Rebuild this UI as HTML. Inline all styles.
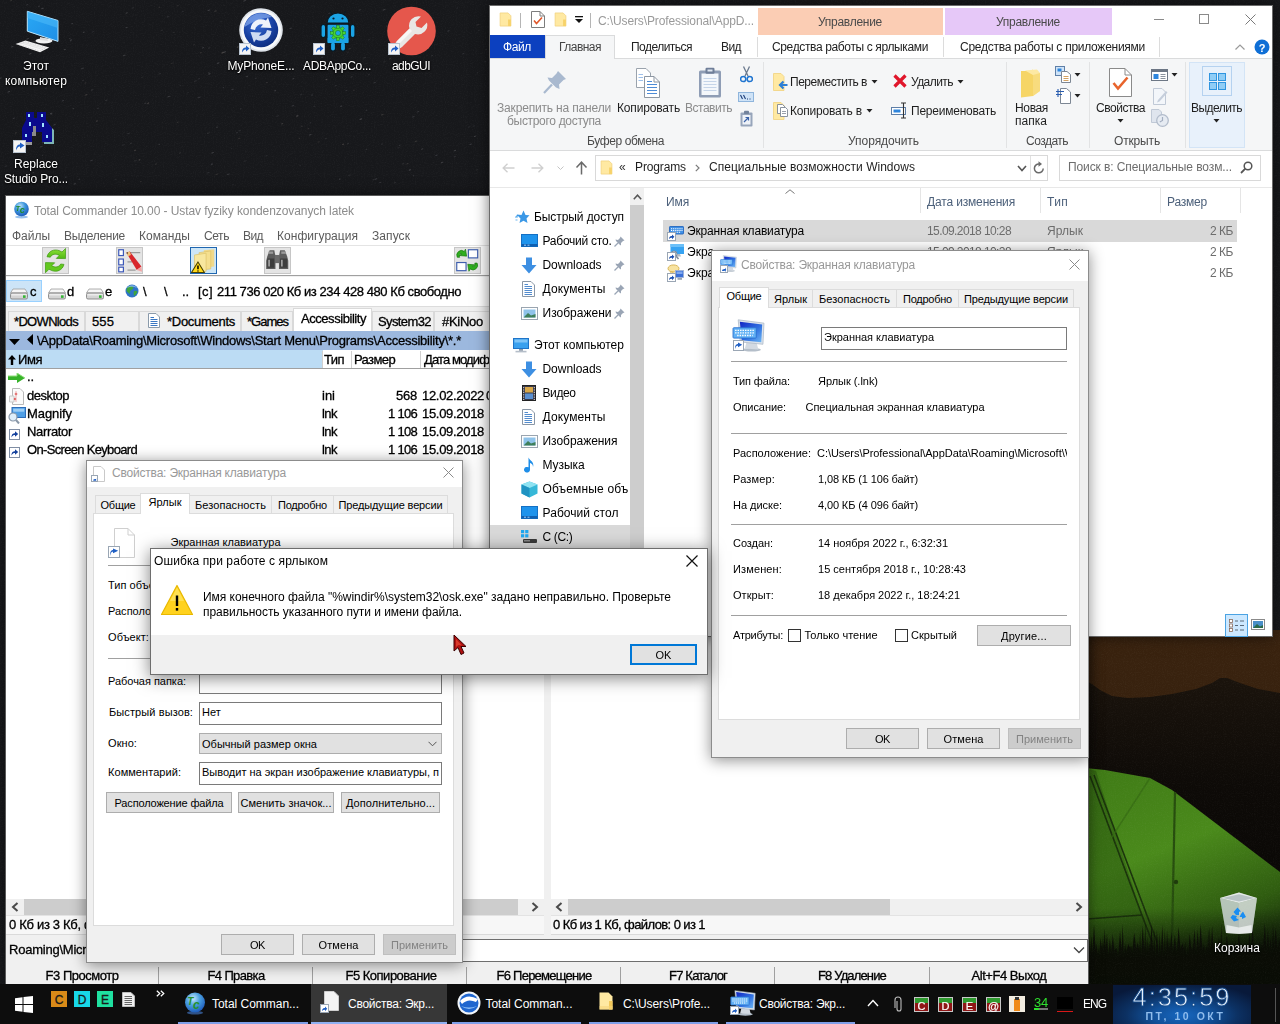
<!DOCTYPE html>
<html><head><meta charset="utf-8"><title>Desktop</title>
<style>
html,body{margin:0;padding:0;width:1280px;height:1024px;overflow:hidden;background:#17181b;font-family:"Liberation Sans", sans-serif;}
#d{position:relative;width:1280px;height:1024px;overflow:hidden;}
#d div,#d span,#d svg{position:absolute;box-sizing:border-box;}
#d span{white-space:pre;}
</style></head><body><div id="d">
<svg style="left:0;top:0" width="1280" height="1024" viewBox="0 0 1280 1024">
<defs>
<filter id="gr" x="0" y="0" width="100%" height="100%"><feTurbulence type="fractalNoise" baseFrequency="0.9" numOctaves="2" seed="3"/><feColorMatrix type="matrix" values="0 0 0 0 1  0 0 0 0 1  0 0 0 0 1  0.5 0.5 0 0 -0.42"/></filter>
<linearGradient id="sky" x1="0" y1="0" x2="0" y2="1"><stop offset="0" stop-color="#3a230f"/><stop offset="1" stop-color="#2b1a0b"/></linearGradient>
<linearGradient id="mt" x1="0" y1="0" x2="0" y2="1"><stop offset="0" stop-color="#1a130c"/><stop offset="0.35" stop-color="#0d0a07"/><stop offset="1" stop-color="#070605"/></linearGradient>
<linearGradient id="tent" x1="0" y1="0" x2="0.35" y2="1"><stop offset="0" stop-color="#3f7a16"/><stop offset="0.45" stop-color="#4a8a1b"/><stop offset="0.8" stop-color="#2f5c10"/><stop offset="1" stop-color="#16290a"/></linearGradient>
<linearGradient id="gnd" x1="0" y1="0" x2="0" y2="1"><stop offset="0" stop-color="#070905" stop-opacity="0"/><stop offset="0.35" stop-color="#070905" stop-opacity=".45"/><stop offset="0.6" stop-color="#070905" stop-opacity=".92"/><stop offset="1" stop-color="#060705"/></linearGradient>
</defs>
<rect width="1280" height="1024" fill="#17181b"/>
<g opacity=".7"><ellipse cx="161.9" cy="30.2" rx="1.4" ry="0.6" fill="#5a5a5e" opacity="0.39" transform="rotate(-18 161.9 30.2)"/><ellipse cx="182.8" cy="11.6" rx="1.3" ry="0.6" fill="#55555a" opacity="0.37" transform="rotate(-18 182.8 11.6)"/><ellipse cx="209.1" cy="48.1" rx="1.3" ry="0.6" fill="#5a5a5e" opacity="0.38" transform="rotate(-18 209.1 48.1)"/><ellipse cx="473.7" cy="126.1" rx="1.3" ry="0.6" fill="#55555a" opacity="0.38" transform="rotate(-18 473.7 126.1)"/><ellipse cx="24.8" cy="44.2" rx="1.3" ry="0.6" fill="#55555a" opacity="0.42" transform="rotate(-18 24.8 44.2)"/><ellipse cx="72.1" cy="23.6" rx="1.1" ry="0.6" fill="#4c4c52" opacity="0.80" transform="rotate(-18 72.1 23.6)"/><ellipse cx="51.5" cy="114.2" rx="1.0" ry="0.6" fill="#5a5a5e" opacity="0.40" transform="rotate(-18 51.5 114.2)"/><ellipse cx="282.2" cy="123.8" rx="1.2" ry="0.6" fill="#66605c" opacity="0.64" transform="rotate(-18 282.2 123.8)"/><ellipse cx="232.8" cy="184.7" rx="1.1" ry="0.6" fill="#4c4c52" opacity="0.49" transform="rotate(-18 232.8 184.7)"/><ellipse cx="349.5" cy="48.8" rx="1.3" ry="0.6" fill="#66605c" opacity="0.64" transform="rotate(-18 349.5 48.8)"/><ellipse cx="364.7" cy="57.6" rx="1.7" ry="0.6" fill="#55555a" opacity="0.41" transform="rotate(-18 364.7 57.6)"/><ellipse cx="82.5" cy="68.4" rx="1.6" ry="0.6" fill="#5a5a5e" opacity="0.58" transform="rotate(-18 82.5 68.4)"/><ellipse cx="382.3" cy="114.6" rx="1.6" ry="0.6" fill="#66605c" opacity="0.52" transform="rotate(-18 382.3 114.6)"/><ellipse cx="297.2" cy="116.0" rx="1.2" ry="0.6" fill="#66605c" opacity="0.81" transform="rotate(-18 297.2 116.0)"/><ellipse cx="237.0" cy="132.8" rx="0.9" ry="0.6" fill="#55555a" opacity="0.74" transform="rotate(-18 237.0 132.8)"/><ellipse cx="142.3" cy="77.2" rx="1.4" ry="0.6" fill="#55555a" opacity="0.36" transform="rotate(-18 142.3 77.2)"/><ellipse cx="177.7" cy="122.2" rx="1.2" ry="0.6" fill="#66605c" opacity="0.47" transform="rotate(-18 177.7 122.2)"/><ellipse cx="64.7" cy="49.5" rx="1.2" ry="0.6" fill="#5a5a5e" opacity="0.83" transform="rotate(-18 64.7 49.5)"/><ellipse cx="83.2" cy="80.3" rx="1.1" ry="0.6" fill="#55555a" opacity="0.43" transform="rotate(-18 83.2 80.3)"/><ellipse cx="432.0" cy="55.7" rx="1.2" ry="0.6" fill="#55555a" opacity="0.55" transform="rotate(-18 432.0 55.7)"/><ellipse cx="478.9" cy="30.2" rx="1.0" ry="0.6" fill="#4c4c52" opacity="0.48" transform="rotate(-18 478.9 30.2)"/><ellipse cx="6.0" cy="166.2" rx="1.0" ry="0.6" fill="#4c4c52" opacity="0.51" transform="rotate(-18 6.0 166.2)"/><ellipse cx="209.5" cy="73.9" rx="1.3" ry="0.6" fill="#5a5a5e" opacity="0.87" transform="rotate(-18 209.5 73.9)"/><ellipse cx="228.3" cy="174.2" rx="1.7" ry="0.6" fill="#55555a" opacity="0.72" transform="rotate(-18 228.3 174.2)"/><ellipse cx="199.0" cy="78.8" rx="1.2" ry="0.6" fill="#4c4c52" opacity="0.57" transform="rotate(-18 199.0 78.8)"/><ellipse cx="33.7" cy="41.8" rx="0.9" ry="0.6" fill="#5a5a5e" opacity="0.54" transform="rotate(-18 33.7 41.8)"/><ellipse cx="51.2" cy="113.4" rx="1.3" ry="0.6" fill="#5a5a5e" opacity="0.87" transform="rotate(-18 51.2 113.4)"/><ellipse cx="35.2" cy="41.6" rx="1.1" ry="0.6" fill="#66605c" opacity="0.70" transform="rotate(-18 35.2 41.6)"/><ellipse cx="301.1" cy="94.8" rx="0.9" ry="0.6" fill="#55555a" opacity="0.62" transform="rotate(-18 301.1 94.8)"/><ellipse cx="240.2" cy="62.4" rx="0.9" ry="0.6" fill="#66605c" opacity="0.76" transform="rotate(-18 240.2 62.4)"/><ellipse cx="239.3" cy="138.4" rx="1.3" ry="0.6" fill="#66605c" opacity="0.46" transform="rotate(-18 239.3 138.4)"/><ellipse cx="73.3" cy="108.6" rx="0.8" ry="0.6" fill="#5a5a5e" opacity="0.64" transform="rotate(-18 73.3 108.6)"/><ellipse cx="348.1" cy="52.2" rx="1.1" ry="0.6" fill="#4c4c52" opacity="0.44" transform="rotate(-18 348.1 52.2)"/><ellipse cx="266.3" cy="155.8" rx="1.1" ry="0.6" fill="#4c4c52" opacity="0.47" transform="rotate(-18 266.3 155.8)"/><ellipse cx="403.0" cy="163.7" rx="1.5" ry="0.6" fill="#55555a" opacity="0.47" transform="rotate(-18 403.0 163.7)"/><ellipse cx="177.8" cy="5.8" rx="0.8" ry="0.6" fill="#66605c" opacity="0.50" transform="rotate(-18 177.8 5.8)"/><ellipse cx="96.8" cy="121.0" rx="1.1" ry="0.6" fill="#66605c" opacity="0.79" transform="rotate(-18 96.8 121.0)"/><ellipse cx="477.5" cy="72.9" rx="1.0" ry="0.6" fill="#4c4c52" opacity="0.47" transform="rotate(-18 477.5 72.9)"/><ellipse cx="168.9" cy="96.5" rx="1.7" ry="0.6" fill="#5a5a5e" opacity="0.69" transform="rotate(-18 168.9 96.5)"/><ellipse cx="239.7" cy="130.6" rx="1.5" ry="0.6" fill="#5a5a5e" opacity="0.40" transform="rotate(-18 239.7 130.6)"/><ellipse cx="454.9" cy="156.5" rx="1.5" ry="0.6" fill="#4c4c52" opacity="0.61" transform="rotate(-18 454.9 156.5)"/><ellipse cx="217.0" cy="127.2" rx="0.9" ry="0.6" fill="#55555a" opacity="0.87" transform="rotate(-18 217.0 127.2)"/><ellipse cx="231.6" cy="148.7" rx="0.9" ry="0.6" fill="#4c4c52" opacity="0.44" transform="rotate(-18 231.6 148.7)"/><ellipse cx="13.8" cy="118.2" rx="1.2" ry="0.6" fill="#55555a" opacity="0.71" transform="rotate(-18 13.8 118.2)"/><ellipse cx="328.6" cy="70.1" rx="1.3" ry="0.6" fill="#5a5a5e" opacity="0.42" transform="rotate(-18 328.6 70.1)"/><ellipse cx="399.7" cy="145.3" rx="0.9" ry="0.6" fill="#4c4c52" opacity="0.76" transform="rotate(-18 399.7 145.3)"/><ellipse cx="216.9" cy="174.3" rx="1.5" ry="0.6" fill="#66605c" opacity="0.47" transform="rotate(-18 216.9 174.3)"/><ellipse cx="106.4" cy="100.2" rx="1.5" ry="0.6" fill="#55555a" opacity="0.53" transform="rotate(-18 106.4 100.2)"/><ellipse cx="417.1" cy="12.2" rx="1.5" ry="0.6" fill="#55555a" opacity="0.84" transform="rotate(-18 417.1 12.2)"/><ellipse cx="413.6" cy="175.6" rx="0.9" ry="0.6" fill="#5a5a5e" opacity="0.43" transform="rotate(-18 413.6 175.6)"/><ellipse cx="436.4" cy="155.3" rx="1.3" ry="0.6" fill="#4c4c52" opacity="0.78" transform="rotate(-18 436.4 155.3)"/><ellipse cx="86.2" cy="94.7" rx="1.5" ry="0.6" fill="#66605c" opacity="0.66" transform="rotate(-18 86.2 94.7)"/><ellipse cx="341.2" cy="106.1" rx="1.2" ry="0.6" fill="#5a5a5e" opacity="0.78" transform="rotate(-18 341.2 106.1)"/><ellipse cx="124.2" cy="55.4" rx="1.5" ry="0.6" fill="#5a5a5e" opacity="0.63" transform="rotate(-18 124.2 55.4)"/><ellipse cx="380.0" cy="182.5" rx="1.2" ry="0.6" fill="#4c4c52" opacity="0.69" transform="rotate(-18 380.0 182.5)"/><ellipse cx="346.4" cy="90.5" rx="1.3" ry="0.6" fill="#4c4c52" opacity="0.61" transform="rotate(-18 346.4 90.5)"/><ellipse cx="349.6" cy="175.3" rx="1.6" ry="0.6" fill="#4c4c52" opacity="0.49" transform="rotate(-18 349.6 175.3)"/><ellipse cx="420.0" cy="27.4" rx="0.9" ry="0.6" fill="#5a5a5e" opacity="0.59" transform="rotate(-18 420.0 27.4)"/><ellipse cx="335.6" cy="85.7" rx="1.0" ry="0.6" fill="#5a5a5e" opacity="0.52" transform="rotate(-18 335.6 85.7)"/><ellipse cx="448.5" cy="30.9" rx="1.4" ry="0.6" fill="#4c4c52" opacity="0.71" transform="rotate(-18 448.5 30.9)"/><ellipse cx="126.6" cy="27.5" rx="1.2" ry="0.6" fill="#5a5a5e" opacity="0.76" transform="rotate(-18 126.6 27.5)"/><ellipse cx="199.1" cy="97.5" rx="1.7" ry="0.6" fill="#4c4c52" opacity="0.81" transform="rotate(-18 199.1 97.5)"/><ellipse cx="353.2" cy="198.8" rx="1.2" ry="0.6" fill="#66605c" opacity="0.58" transform="rotate(-18 353.2 198.8)"/><ellipse cx="159.3" cy="144.4" rx="0.8" ry="0.6" fill="#55555a" opacity="0.65" transform="rotate(-18 159.3 144.4)"/><ellipse cx="351.6" cy="76.9" rx="1.3" ry="0.6" fill="#5a5a5e" opacity="0.51" transform="rotate(-18 351.6 76.9)"/><ellipse cx="56.4" cy="183.7" rx="1.0" ry="0.6" fill="#5a5a5e" opacity="0.83" transform="rotate(-18 56.4 183.7)"/><ellipse cx="132.8" cy="7.9" rx="1.5" ry="0.6" fill="#4c4c52" opacity="0.50" transform="rotate(-18 132.8 7.9)"/><ellipse cx="409.9" cy="169.9" rx="1.4" ry="0.6" fill="#55555a" opacity="0.87" transform="rotate(-18 409.9 169.9)"/><ellipse cx="74.7" cy="183.8" rx="1.3" ry="0.6" fill="#5a5a5e" opacity="0.74" transform="rotate(-18 74.7 183.8)"/><ellipse cx="139.5" cy="159.9" rx="1.0" ry="0.6" fill="#66605c" opacity="0.84" transform="rotate(-18 139.5 159.9)"/><ellipse cx="469.2" cy="126.9" rx="1.5" ry="0.6" fill="#4c4c52" opacity="0.40" transform="rotate(-18 469.2 126.9)"/><ellipse cx="33.3" cy="172.6" rx="1.2" ry="0.6" fill="#55555a" opacity="0.54" transform="rotate(-18 33.3 172.6)"/><ellipse cx="463.3" cy="53.6" rx="0.9" ry="0.6" fill="#4c4c52" opacity="0.64" transform="rotate(-18 463.3 53.6)"/><ellipse cx="469.1" cy="193.8" rx="1.0" ry="0.6" fill="#66605c" opacity="0.45" transform="rotate(-18 469.1 193.8)"/><ellipse cx="314.3" cy="106.2" rx="1.0" ry="0.6" fill="#4c4c52" opacity="0.60" transform="rotate(-18 314.3 106.2)"/><ellipse cx="135.3" cy="160.7" rx="1.7" ry="0.6" fill="#5a5a5e" opacity="0.37" transform="rotate(-18 135.3 160.7)"/><ellipse cx="366.5" cy="110.2" rx="1.0" ry="0.6" fill="#55555a" opacity="0.61" transform="rotate(-18 366.5 110.2)"/><ellipse cx="53.1" cy="163.8" rx="1.2" ry="0.6" fill="#55555a" opacity="0.62" transform="rotate(-18 53.1 163.8)"/><ellipse cx="485.2" cy="61.6" rx="1.0" ry="0.6" fill="#4c4c52" opacity="0.48" transform="rotate(-18 485.2 61.6)"/><ellipse cx="416.1" cy="141.3" rx="1.4" ry="0.6" fill="#66605c" opacity="0.57" transform="rotate(-18 416.1 141.3)"/><ellipse cx="490.9" cy="167.4" rx="0.8" ry="0.6" fill="#66605c" opacity="0.69" transform="rotate(-18 490.9 167.4)"/><ellipse cx="215.4" cy="11.1" rx="1.4" ry="0.6" fill="#66605c" opacity="0.56" transform="rotate(-18 215.4 11.1)"/><ellipse cx="299.4" cy="138.5" rx="0.8" ry="0.6" fill="#66605c" opacity="0.45" transform="rotate(-18 299.4 138.5)"/><ellipse cx="222.9" cy="52.6" rx="1.7" ry="0.6" fill="#66605c" opacity="0.88" transform="rotate(-18 222.9 52.6)"/><ellipse cx="122.2" cy="193.1" rx="1.1" ry="0.6" fill="#5a5a5e" opacity="0.55" transform="rotate(-18 122.2 193.1)"/><ellipse cx="167.7" cy="16.8" rx="1.1" ry="0.6" fill="#4c4c52" opacity="0.71" transform="rotate(-18 167.7 16.8)"/><ellipse cx="252.4" cy="1.0" rx="1.0" ry="0.6" fill="#55555a" opacity="0.40" transform="rotate(-18 252.4 1.0)"/><ellipse cx="293.4" cy="78.8" rx="1.1" ry="0.6" fill="#5a5a5e" opacity="0.70" transform="rotate(-18 293.4 78.8)"/><ellipse cx="292.8" cy="105.8" rx="1.5" ry="0.6" fill="#55555a" opacity="0.71" transform="rotate(-18 292.8 105.8)"/><ellipse cx="382.2" cy="144.1" rx="1.2" ry="0.6" fill="#4c4c52" opacity="0.51" transform="rotate(-18 382.2 144.1)"/><ellipse cx="21.9" cy="167.1" rx="1.6" ry="0.6" fill="#4c4c52" opacity="0.70" transform="rotate(-18 21.9 167.1)"/><ellipse cx="454.9" cy="150.6" rx="1.3" ry="0.6" fill="#5a5a5e" opacity="0.80" transform="rotate(-18 454.9 150.6)"/><ellipse cx="413.2" cy="116.8" rx="1.6" ry="0.6" fill="#4c4c52" opacity="0.73" transform="rotate(-18 413.2 116.8)"/><ellipse cx="42.5" cy="8.4" rx="1.4" ry="0.6" fill="#55555a" opacity="0.88" transform="rotate(-18 42.5 8.4)"/><ellipse cx="417.9" cy="111.7" rx="1.4" ry="0.6" fill="#4c4c52" opacity="0.69" transform="rotate(-18 417.9 111.7)"/><ellipse cx="244.6" cy="0.7" rx="1.5" ry="0.6" fill="#5a5a5e" opacity="0.76" transform="rotate(-18 244.6 0.7)"/><ellipse cx="329.6" cy="13.2" rx="1.5" ry="0.6" fill="#5a5a5e" opacity="0.49" transform="rotate(-18 329.6 13.2)"/><ellipse cx="423.1" cy="47.0" rx="1.5" ry="0.6" fill="#55555a" opacity="0.48" transform="rotate(-18 423.1 47.0)"/><ellipse cx="247.0" cy="76.5" rx="1.2" ry="0.6" fill="#5a5a5e" opacity="0.73" transform="rotate(-18 247.0 76.5)"/><ellipse cx="308.5" cy="128.6" rx="0.9" ry="0.6" fill="#66605c" opacity="0.43" transform="rotate(-18 308.5 128.6)"/><ellipse cx="325.8" cy="138.6" rx="1.4" ry="0.6" fill="#55555a" opacity="0.42" transform="rotate(-18 325.8 138.6)"/><ellipse cx="30.3" cy="53.8" rx="1.4" ry="0.6" fill="#55555a" opacity="0.73" transform="rotate(-18 30.3 53.8)"/><ellipse cx="145.4" cy="103.3" rx="1.2" ry="0.6" fill="#5a5a5e" opacity="0.61" transform="rotate(-18 145.4 103.3)"/><ellipse cx="496.7" cy="109.8" rx="1.1" ry="0.6" fill="#55555a" opacity="0.40" transform="rotate(-18 496.7 109.8)"/><ellipse cx="8.8" cy="91.8" rx="1.5" ry="0.6" fill="#55555a" opacity="0.88" transform="rotate(-18 8.8 91.8)"/><ellipse cx="497.0" cy="77.4" rx="1.6" ry="0.6" fill="#5a5a5e" opacity="0.86" transform="rotate(-18 497.0 77.4)"/><ellipse cx="290.7" cy="28.3" rx="1.3" ry="0.6" fill="#4c4c52" opacity="0.87" transform="rotate(-18 290.7 28.3)"/><ellipse cx="301.7" cy="126.3" rx="1.1" ry="0.6" fill="#66605c" opacity="0.41" transform="rotate(-18 301.7 126.3)"/><ellipse cx="115.7" cy="179.5" rx="1.2" ry="0.6" fill="#5a5a5e" opacity="0.36" transform="rotate(-18 115.7 179.5)"/><ellipse cx="475.0" cy="136.3" rx="1.2" ry="0.6" fill="#55555a" opacity="0.75" transform="rotate(-18 475.0 136.3)"/><ellipse cx="172.0" cy="63.2" rx="1.6" ry="0.6" fill="#66605c" opacity="0.35" transform="rotate(-18 172.0 63.2)"/><ellipse cx="419.6" cy="24.0" rx="1.6" ry="0.6" fill="#66605c" opacity="0.74" transform="rotate(-18 419.6 24.0)"/><ellipse cx="126.6" cy="13.0" rx="1.2" ry="0.6" fill="#5a5a5e" opacity="0.83" transform="rotate(-18 126.6 13.0)"/><ellipse cx="180.4" cy="85.6" rx="1.0" ry="0.6" fill="#5a5a5e" opacity="0.38" transform="rotate(-18 180.4 85.6)"/><ellipse cx="25.8" cy="132.4" rx="1.4" ry="0.6" fill="#66605c" opacity="0.43" transform="rotate(-18 25.8 132.4)"/><ellipse cx="218.1" cy="63.1" rx="1.5" ry="0.6" fill="#55555a" opacity="0.78" transform="rotate(-18 218.1 63.1)"/><ellipse cx="442.1" cy="162.4" rx="1.4" ry="0.6" fill="#4c4c52" opacity="0.85" transform="rotate(-18 442.1 162.4)"/><ellipse cx="359.8" cy="9.9" rx="1.5" ry="0.6" fill="#4c4c52" opacity="0.60" transform="rotate(-18 359.8 9.9)"/><ellipse cx="322.2" cy="57.2" rx="0.8" ry="0.6" fill="#4c4c52" opacity="0.86" transform="rotate(-18 322.2 57.2)"/><ellipse cx="85.4" cy="83.0" rx="1.1" ry="0.6" fill="#66605c" opacity="0.49" transform="rotate(-18 85.4 83.0)"/><ellipse cx="203.1" cy="47.7" rx="1.2" ry="0.6" fill="#5a5a5e" opacity="0.72" transform="rotate(-18 203.1 47.7)"/><ellipse cx="83.7" cy="32.3" rx="1.0" ry="0.6" fill="#55555a" opacity="0.85" transform="rotate(-18 83.7 32.3)"/><ellipse cx="275.2" cy="90.6" rx="1.1" ry="0.6" fill="#55555a" opacity="0.77" transform="rotate(-18 275.2 90.6)"/><ellipse cx="69.8" cy="38.5" rx="0.9" ry="0.6" fill="#5a5a5e" opacity="0.54" transform="rotate(-18 69.8 38.5)"/><ellipse cx="159.6" cy="73.7" rx="1.5" ry="0.6" fill="#5a5a5e" opacity="0.46" transform="rotate(-18 159.6 73.7)"/><ellipse cx="374.8" cy="82.6" rx="1.2" ry="0.6" fill="#55555a" opacity="0.64" transform="rotate(-18 374.8 82.6)"/><ellipse cx="135.1" cy="150.4" rx="1.2" ry="0.6" fill="#66605c" opacity="0.67" transform="rotate(-18 135.1 150.4)"/><ellipse cx="62.9" cy="100.7" rx="1.4" ry="0.6" fill="#4c4c52" opacity="0.82" transform="rotate(-18 62.9 100.7)"/><ellipse cx="46.3" cy="179.4" rx="1.1" ry="0.6" fill="#55555a" opacity="0.71" transform="rotate(-18 46.3 179.4)"/><ellipse cx="477.0" cy="169.7" rx="1.6" ry="0.6" fill="#5a5a5e" opacity="0.36" transform="rotate(-18 477.0 169.7)"/><ellipse cx="212.6" cy="152.7" rx="1.5" ry="0.6" fill="#55555a" opacity="0.88" transform="rotate(-18 212.6 152.7)"/><ellipse cx="0.1" cy="78.3" rx="1.6" ry="0.6" fill="#55555a" opacity="0.80" transform="rotate(-18 0.1 78.3)"/><ellipse cx="486.1" cy="49.7" rx="0.9" ry="0.6" fill="#5a5a5e" opacity="0.43" transform="rotate(-18 486.1 49.7)"/><ellipse cx="470.7" cy="144.3" rx="1.4" ry="0.6" fill="#55555a" opacity="0.77" transform="rotate(-18 470.7 144.3)"/><ellipse cx="42.5" cy="155.4" rx="0.8" ry="0.6" fill="#5a5a5e" opacity="0.42" transform="rotate(-18 42.5 155.4)"/><ellipse cx="322.8" cy="60.8" rx="0.9" ry="0.6" fill="#55555a" opacity="0.49" transform="rotate(-18 322.8 60.8)"/><ellipse cx="349.3" cy="22.4" rx="0.9" ry="0.6" fill="#4c4c52" opacity="0.64" transform="rotate(-18 349.3 22.4)"/><ellipse cx="194.0" cy="44.7" rx="1.3" ry="0.6" fill="#66605c" opacity="0.36" transform="rotate(-18 194.0 44.7)"/><ellipse cx="498.2" cy="55.7" rx="1.1" ry="0.6" fill="#4c4c52" opacity="0.81" transform="rotate(-18 498.2 55.7)"/><ellipse cx="237.7" cy="47.0" rx="1.0" ry="0.6" fill="#66605c" opacity="0.88" transform="rotate(-18 237.7 47.0)"/><ellipse cx="27.7" cy="38.8" rx="1.6" ry="0.6" fill="#5a5a5e" opacity="0.71" transform="rotate(-18 27.7 38.8)"/><ellipse cx="128.6" cy="133.5" rx="1.6" ry="0.6" fill="#5a5a5e" opacity="0.47" transform="rotate(-18 128.6 133.5)"/><ellipse cx="347.9" cy="143.7" rx="1.1" ry="0.6" fill="#5a5a5e" opacity="0.57" transform="rotate(-18 347.9 143.7)"/><ellipse cx="398.5" cy="147.8" rx="1.3" ry="0.6" fill="#4c4c52" opacity="0.46" transform="rotate(-18 398.5 147.8)"/><ellipse cx="155.9" cy="164.0" rx="1.0" ry="0.6" fill="#66605c" opacity="0.47" transform="rotate(-18 155.9 164.0)"/><ellipse cx="54.5" cy="124.7" rx="1.3" ry="0.6" fill="#55555a" opacity="0.84" transform="rotate(-18 54.5 124.7)"/><ellipse cx="208.5" cy="133.1" rx="1.7" ry="0.6" fill="#55555a" opacity="0.43" transform="rotate(-18 208.5 133.1)"/><ellipse cx="27.2" cy="4.7" rx="1.3" ry="0.6" fill="#5a5a5e" opacity="0.58" transform="rotate(-18 27.2 4.7)"/><ellipse cx="92.1" cy="89.9" rx="1.4" ry="0.6" fill="#5a5a5e" opacity="0.52" transform="rotate(-18 92.1 89.9)"/><ellipse cx="498.8" cy="186.3" rx="1.1" ry="0.6" fill="#55555a" opacity="0.45" transform="rotate(-18 498.8 186.3)"/><ellipse cx="15.9" cy="132.9" rx="1.1" ry="0.6" fill="#66605c" opacity="0.56" transform="rotate(-18 15.9 132.9)"/><ellipse cx="221.2" cy="21.8" rx="0.9" ry="0.6" fill="#55555a" opacity="0.39" transform="rotate(-18 221.2 21.8)"/><ellipse cx="477.8" cy="24.7" rx="1.7" ry="0.6" fill="#66605c" opacity="0.46" transform="rotate(-18 477.8 24.7)"/><ellipse cx="384.4" cy="61.7" rx="1.5" ry="0.6" fill="#55555a" opacity="0.40" transform="rotate(-18 384.4 61.7)"/><ellipse cx="97.9" cy="108.3" rx="1.2" ry="0.6" fill="#55555a" opacity="0.53" transform="rotate(-18 97.9 108.3)"/><ellipse cx="15.1" cy="82.2" rx="1.5" ry="0.6" fill="#5a5a5e" opacity="0.77" transform="rotate(-18 15.1 82.2)"/><ellipse cx="187.8" cy="92.8" rx="1.5" ry="0.6" fill="#4c4c52" opacity="0.38" transform="rotate(-18 187.8 92.8)"/><ellipse cx="373.6" cy="179.7" rx="1.1" ry="0.6" fill="#5a5a5e" opacity="0.50" transform="rotate(-18 373.6 179.7)"/><ellipse cx="131.1" cy="143.3" rx="1.1" ry="0.6" fill="#5a5a5e" opacity="0.50" transform="rotate(-18 131.1 143.3)"/><ellipse cx="360.8" cy="119.1" rx="1.5" ry="0.6" fill="#5a5a5e" opacity="0.87" transform="rotate(-18 360.8 119.1)"/><ellipse cx="12.1" cy="46.8" rx="1.2" ry="0.6" fill="#55555a" opacity="0.88" transform="rotate(-18 12.1 46.8)"/><ellipse cx="394.9" cy="182.7" rx="1.5" ry="0.6" fill="#55555a" opacity="0.42" transform="rotate(-18 394.9 182.7)"/><ellipse cx="91.5" cy="160.5" rx="1.5" ry="0.6" fill="#4c4c52" opacity="0.80" transform="rotate(-18 91.5 160.5)"/><ellipse cx="303.6" cy="65.6" rx="1.1" ry="0.6" fill="#5a5a5e" opacity="0.55" transform="rotate(-18 303.6 65.6)"/><ellipse cx="255.9" cy="78.3" rx="0.9" ry="0.6" fill="#5a5a5e" opacity="0.57" transform="rotate(-18 255.9 78.3)"/><ellipse cx="240.8" cy="108.9" rx="0.9" ry="0.6" fill="#5a5a5e" opacity="0.58" transform="rotate(-18 240.8 108.9)"/><ellipse cx="493.9" cy="53.0" rx="0.9" ry="0.6" fill="#55555a" opacity="0.40" transform="rotate(-18 493.9 53.0)"/><ellipse cx="494.2" cy="194.4" rx="1.0" ry="0.6" fill="#55555a" opacity="0.42" transform="rotate(-18 494.2 194.4)"/><ellipse cx="310.2" cy="134.8" rx="1.5" ry="0.6" fill="#5a5a5e" opacity="0.82" transform="rotate(-18 310.2 134.8)"/><ellipse cx="389.9" cy="58.8" rx="1.1" ry="0.6" fill="#66605c" opacity="0.50" transform="rotate(-18 389.9 58.8)"/><ellipse cx="369.0" cy="39.8" rx="1.0" ry="0.6" fill="#4c4c52" opacity="0.48" transform="rotate(-18 369.0 39.8)"/><ellipse cx="140.7" cy="181.5" rx="1.0" ry="0.6" fill="#66605c" opacity="0.39" transform="rotate(-18 140.7 181.5)"/><ellipse cx="496.2" cy="101.5" rx="1.0" ry="0.6" fill="#55555a" opacity="0.79" transform="rotate(-18 496.2 101.5)"/><ellipse cx="495.5" cy="20.5" rx="1.2" ry="0.6" fill="#55555a" opacity="0.80" transform="rotate(-18 495.5 20.5)"/><ellipse cx="457.2" cy="8.1" rx="1.1" ry="0.6" fill="#4c4c52" opacity="0.42" transform="rotate(-18 457.2 8.1)"/><ellipse cx="300.2" cy="165.6" rx="1.0" ry="0.6" fill="#4c4c52" opacity="0.39" transform="rotate(-18 300.2 165.6)"/><ellipse cx="224.6" cy="52.0" rx="1.5" ry="0.6" fill="#5a5a5e" opacity="0.87" transform="rotate(-18 224.6 52.0)"/><ellipse cx="318.7" cy="141.9" rx="1.1" ry="0.6" fill="#66605c" opacity="0.37" transform="rotate(-18 318.7 141.9)"/><ellipse cx="70.7" cy="40.8" rx="1.0" ry="0.6" fill="#4c4c52" opacity="0.68" transform="rotate(-18 70.7 40.8)"/><ellipse cx="407.4" cy="163.8" rx="1.2" ry="0.6" fill="#66605c" opacity="0.55" transform="rotate(-18 407.4 163.8)"/><ellipse cx="39.0" cy="6.3" rx="1.2" ry="0.6" fill="#55555a" opacity="0.62" transform="rotate(-18 39.0 6.3)"/><ellipse cx="50.7" cy="79.1" rx="1.3" ry="0.6" fill="#5a5a5e" opacity="0.70" transform="rotate(-18 50.7 79.1)"/><ellipse cx="326.5" cy="79.6" rx="1.0" ry="0.6" fill="#66605c" opacity="0.89" transform="rotate(-18 326.5 79.6)"/><ellipse cx="208.9" cy="10.3" rx="1.5" ry="0.6" fill="#55555a" opacity="0.84" transform="rotate(-18 208.9 10.3)"/><ellipse cx="208.2" cy="172.8" rx="1.7" ry="0.6" fill="#4c4c52" opacity="0.55" transform="rotate(-18 208.2 172.8)"/><ellipse cx="195.4" cy="81.0" rx="1.6" ry="0.6" fill="#4c4c52" opacity="0.59" transform="rotate(-18 195.4 81.0)"/><ellipse cx="211.9" cy="164.1" rx="1.2" ry="0.6" fill="#55555a" opacity="0.84" transform="rotate(-18 211.9 164.1)"/><ellipse cx="386.5" cy="26.0" rx="0.8" ry="0.6" fill="#55555a" opacity="0.43" transform="rotate(-18 386.5 26.0)"/><ellipse cx="44.5" cy="124.4" rx="1.1" ry="0.6" fill="#4c4c52" opacity="0.63" transform="rotate(-18 44.5 124.4)"/><ellipse cx="174.0" cy="32.4" rx="1.0" ry="0.6" fill="#55555a" opacity="0.39" transform="rotate(-18 174.0 32.4)"/><ellipse cx="245.3" cy="161.0" rx="1.7" ry="0.6" fill="#4c4c52" opacity="0.46" transform="rotate(-18 245.3 161.0)"/><ellipse cx="418.6" cy="8.7" rx="1.6" ry="0.6" fill="#55555a" opacity="0.52" transform="rotate(-18 418.6 8.7)"/><ellipse cx="43.1" cy="142.5" rx="1.4" ry="0.6" fill="#4c4c52" opacity="0.84" transform="rotate(-18 43.1 142.5)"/><ellipse cx="310.5" cy="122.9" rx="1.0" ry="0.6" fill="#4c4c52" opacity="0.61" transform="rotate(-18 310.5 122.9)"/><ellipse cx="20.9" cy="187.7" rx="0.9" ry="0.6" fill="#4c4c52" opacity="0.55" transform="rotate(-18 20.9 187.7)"/><ellipse cx="123.5" cy="145.0" rx="1.6" ry="0.6" fill="#5a5a5e" opacity="0.37" transform="rotate(-18 123.5 145.0)"/><ellipse cx="333.9" cy="64.8" rx="1.2" ry="0.6" fill="#66605c" opacity="0.60" transform="rotate(-18 333.9 64.8)"/><ellipse cx="324.5" cy="61.6" rx="1.0" ry="0.6" fill="#66605c" opacity="0.56" transform="rotate(-18 324.5 61.6)"/><ellipse cx="223.4" cy="87.7" rx="0.8" ry="0.6" fill="#55555a" opacity="0.69" transform="rotate(-18 223.4 87.7)"/><ellipse cx="232.6" cy="89.4" rx="1.4" ry="0.6" fill="#4c4c52" opacity="0.80" transform="rotate(-18 232.6 89.4)"/><ellipse cx="405.3" cy="80.1" rx="0.9" ry="0.6" fill="#66605c" opacity="0.55" transform="rotate(-18 405.3 80.1)"/><ellipse cx="45.9" cy="88.4" rx="1.3" ry="0.6" fill="#4c4c52" opacity="0.37" transform="rotate(-18 45.9 88.4)"/><ellipse cx="41.1" cy="146.7" rx="1.5" ry="0.6" fill="#5a5a5e" opacity="0.63" transform="rotate(-18 41.1 146.7)"/><ellipse cx="376.0" cy="179.0" rx="1.4" ry="0.6" fill="#5a5a5e" opacity="0.78" transform="rotate(-18 376.0 179.0)"/><ellipse cx="428.5" cy="199.2" rx="1.5" ry="0.6" fill="#4c4c52" opacity="0.80" transform="rotate(-18 428.5 199.2)"/><ellipse cx="65.8" cy="177.1" rx="1.1" ry="0.6" fill="#4c4c52" opacity="0.80" transform="rotate(-18 65.8 177.1)"/><ellipse cx="343.1" cy="144.2" rx="1.0" ry="0.6" fill="#66605c" opacity="0.81" transform="rotate(-18 343.1 144.2)"/><ellipse cx="79.4" cy="179.3" rx="1.0" ry="0.6" fill="#4c4c52" opacity="0.80" transform="rotate(-18 79.4 179.3)"/><ellipse cx="127.1" cy="192.9" rx="1.2" ry="0.6" fill="#4c4c52" opacity="0.68" transform="rotate(-18 127.1 192.9)"/><ellipse cx="159.5" cy="7.4" rx="1.0" ry="0.6" fill="#66605c" opacity="0.44" transform="rotate(-18 159.5 7.4)"/><ellipse cx="339.8" cy="179.1" rx="1.0" ry="0.6" fill="#5a5a5e" opacity="0.78" transform="rotate(-18 339.8 179.1)"/><ellipse cx="384.1" cy="9.7" rx="1.6" ry="0.6" fill="#55555a" opacity="0.88" transform="rotate(-18 384.1 9.7)"/><ellipse cx="277.6" cy="116.0" rx="1.6" ry="0.6" fill="#55555a" opacity="0.41" transform="rotate(-18 277.6 116.0)"/><ellipse cx="369.0" cy="74.3" rx="1.1" ry="0.6" fill="#4c4c52" opacity="0.55" transform="rotate(-18 369.0 74.3)"/><ellipse cx="180.1" cy="152.9" rx="1.2" ry="0.6" fill="#5a5a5e" opacity="0.45" transform="rotate(-18 180.1 152.9)"/><ellipse cx="148.2" cy="103.2" rx="1.1" ry="0.6" fill="#66605c" opacity="0.88" transform="rotate(-18 148.2 103.2)"/><ellipse cx="366.5" cy="149.4" rx="1.0" ry="0.6" fill="#55555a" opacity="0.51" transform="rotate(-18 366.5 149.4)"/><ellipse cx="208.8" cy="72.8" rx="0.8" ry="0.6" fill="#5a5a5e" opacity="0.62" transform="rotate(-18 208.8 72.8)"/><ellipse cx="11.1" cy="0.5" rx="1.1" ry="0.6" fill="#66605c" opacity="0.41" transform="rotate(-18 11.1 0.5)"/><ellipse cx="267.1" cy="82.6" rx="1.1" ry="0.6" fill="#66605c" opacity="0.42" transform="rotate(-18 267.1 82.6)"/><ellipse cx="312.0" cy="95.0" rx="0.9" ry="0.6" fill="#4c4c52" opacity="0.87" transform="rotate(-18 312.0 95.0)"/><ellipse cx="353.7" cy="90.2" rx="0.9" ry="0.6" fill="#66605c" opacity="0.43" transform="rotate(-18 353.7 90.2)"/><ellipse cx="201.0" cy="52.8" rx="0.8" ry="0.6" fill="#66605c" opacity="0.70" transform="rotate(-18 201.0 52.8)"/><ellipse cx="297.4" cy="115.7" rx="1.3" ry="0.6" fill="#55555a" opacity="0.63" transform="rotate(-18 297.4 115.7)"/><ellipse cx="124.2" cy="180.7" rx="0.8" ry="0.6" fill="#55555a" opacity="0.64" transform="rotate(-18 124.2 180.7)"/><ellipse cx="92.8" cy="31.8" rx="1.6" ry="0.6" fill="#4c4c52" opacity="0.41" transform="rotate(-18 92.8 31.8)"/><ellipse cx="71.1" cy="39.9" rx="1.3" ry="0.6" fill="#55555a" opacity="0.63" transform="rotate(-18 71.1 39.9)"/><ellipse cx="406.7" cy="34.9" rx="1.1" ry="0.6" fill="#5a5a5e" opacity="0.52" transform="rotate(-18 406.7 34.9)"/><ellipse cx="497.0" cy="144.9" rx="1.2" ry="0.6" fill="#55555a" opacity="0.65" transform="rotate(-18 497.0 144.9)"/><ellipse cx="422.2" cy="149.0" rx="1.2" ry="0.6" fill="#55555a" opacity="0.76" transform="rotate(-18 422.2 149.0)"/></g>
<rect x="1085" y="630" width="195" height="360" fill="url(#sky)"/>
<path d="M1085 681 L1092 684 L1100 690 L1112 696 L1128 698 L1150 697 L1172 694 L1196 689 L1212 683 L1220 678 L1227 678 L1240 683 L1258 689 L1280 693 L1280 990 L1085 990Z" fill="url(#mt)"/>
<path d="M1085 768 L1105 770 L1150 778 L1172 790 L1280 872 L1280 990 L1085 990Z" fill="url(#tent)"/>
<path d="M1085 768 L1096 771 L1150 940 L1085 940Z" fill="#2c5a10" opacity=".55"/>
<path d="M1090 776 L1152 942 M1094 775 L1157 942" stroke="#1a330b" stroke-width="1.6" fill="none"/>
<path d="M1150 778 L1110 840" stroke="#356a13" stroke-width="1.5" fill="none" opacity=".7"/>
<path d="M1175 792 L1172 940" stroke="#274e0e" stroke-width="2.2" fill="none"/>
<circle cx="1176" cy="882" r="2.2" fill="#1e3b0b"/>
<path d="M1087 919 L1142 915" stroke="#1a330b" stroke-width="1.6" fill="none"/>
<rect x="1085" y="908" width="195" height="82" fill="url(#gnd)"/>
<path d="M1085 990 L1085 945 L1086.3 936.6 L1087.6 957.2 L1089.0 935.2 L1090.3 953.9 L1091.3 935.3 L1092.3 954.3 L1094.0 924.4 L1095.7 951.0 L1096.6 943.1 L1097.5 954.9 L1098.3 947.5 L1099.1 957.6 L1100.6 938.0 L1102.2 949.6 L1103.0 935.7 L1103.7 948.6 L1104.7 928.3 L1105.7 948.3 L1107.0 933.5 L1108.4 956.4 L1109.8 938.6 L1111.2 953.0 L1112.8 933.9 L1114.3 950.8 L1116.3 947.9 L1118.3 956.4 L1120.0 930.2 L1121.6 950.3 L1122.7 923.8 L1123.8 955.7 L1125.1 944.0 L1126.3 951.9 L1128.3 944.0 L1130.2 948.0 L1131.2 945.7 L1132.2 952.7 L1134.2 932.3 L1136.2 948.7 L1137.7 942.2 L1139.3 950.7 L1140.1 930.6 L1141.0 957.6 L1142.7 925.1 L1144.4 950.5 L1145.3 923.6 L1146.1 956.0 L1147.1 936.5 L1148.1 952.5 L1149.1 941.0 L1150.0 949.3 L1151.6 925.0 L1153.2 952.2 L1154.2 929.0 L1155.2 957.7 L1156.9 929.9 L1158.7 956.8 L1159.7 932.3 L1160.7 956.5 L1162.3 924.6 L1163.8 957.9 L1164.8 928.7 L1165.9 955.7 L1167.0 929.7 L1168.2 948.7 L1169.0 937.2 L1169.9 950.4 L1171.4 931.7 L1172.9 952.5 L1174.9 934.6 L1176.8 953.7 L1178.6 926.8 L1180.5 949.5 L1182.4 943.3 L1184.3 950.5 L1185.2 941.2 L1186.2 957.4 L1187.2 946.7 L1188.2 956.8 L1189.7 933.0 L1191.2 949.0 L1192.0 947.0 L1192.8 950.4 L1194.5 928.7 L1196.1 956.2 L1197.6 929.6 L1199.1 949.8 L1200.7 923.8 L1202.4 950.3 L1203.8 944.2 L1205.3 954.1 L1206.4 945.9 L1207.5 950.0 L1208.2 929.0 L1209.0 952.5 L1209.8 926.6 L1210.7 951.7 L1212.1 925.4 L1213.6 951.6 L1215.5 947.5 L1217.3 954.6 L1218.9 937.2 L1220.6 949.4 L1221.3 922.5 L1222.1 957.1 L1223.8 947.0 L1225.4 948.2 L1226.9 934.5 L1228.5 955.3 L1229.6 948.0 L1230.8 948.8 L1232.2 941.2 L1233.6 957.0 L1235.3 940.3 L1237.0 955.9 L1238.9 931.1 L1240.8 954.9 L1242.7 944.6 L1244.5 952.2 L1246.3 944.5 L1248.0 953.7 L1249.5 931.9 L1251.1 953.8 L1252.6 924.1 L1254.1 954.4 L1256.1 944.9 L1258.1 955.3 L1259.3 941.1 L1260.5 953.8 L1261.8 943.8 L1263.1 948.8 L1264.8 922.8 L1266.5 954.0 L1267.9 928.0 L1269.2 955.0 L1270.6 938.0 L1272.0 957.2 L1273.0 922.3 L1274.1 951.0 L1275.7 927.3 L1277.3 949.7 L1279.2 939.2 L1281.1 952.4 L1280 990Z" fill="#0a0d06" opacity=".88"/>
<rect width="1280" height="1024" filter="url(#gr)" opacity="0.10"/>
</svg>
<svg style="left:12px;top:8px;" width="52" height="48" viewBox="0 0 52 48"><defs><linearGradient id="pcg" x1="0" y1="0" x2="1" y2="1"><stop offset="0" stop-color="#29a8f5"/><stop offset="1" stop-color="#1f8fe6"/></linearGradient></defs>
<ellipse cx="32" cy="32.800" rx="8.500" ry="2.600" fill="#f1f1f1"/><path d="M28 29 L35 30.500 L36 33 L28 32Z" fill="#dcdcdc"/>
<path d="M15.300 3.300 L46 12.500 L46 33.400 L15.300 23.200Z" fill="url(#pcg)" stroke="#bfe6fc" stroke-width="1"/>
<path d="M15.300 3.300 L46 12.500 L46 20 L15.300 10Z" fill="#4fbcfa" opacity=".55"/>
<path d="M3.600 36 L13.400 32.600 L37.200 39.500 L28 44.300Z" fill="#f4f4f4"/>
<path d="M6 36.200 L13.400 33.800 L34 39.600 L27.800 43Z" fill="none" stroke="#cfcfcf" stroke-width=".7" stroke-dasharray="1.500 1"/><path d="M9 35 L31 41.500 M11.500 34.300 L33 40.500" stroke="#d6d6d6" stroke-width=".6"/></svg>
<span style="left:36px;top:57.84px;font-size:12px;line-height:16px;color:#fff;letter-spacing:0.023px;left:23.0px;text-shadow:0 1px 2px #000,0 0 2px #000;">Этот</span>
<span style="left:36px;top:72.84px;font-size:12px;line-height:16px;color:#fff;letter-spacing:0.165px;left:5.0px;text-shadow:0 1px 2px #000,0 0 2px #000;">компьютер</span>
<svg style="left:18px;top:110px;" width="38" height="36" viewBox="0 0 38 36">
<path d="M8 2 L16 2 L16 8 L19 8 L19 2 L28 2 L28 10 L34 18 L34 32 L24 32 L24 22 L18 22 L18 26 L14 26 L14 32 L4 32 L4 18 L8 10Z" fill="#0a0a8c"/>
<path d="M30 14 L36 20 L36 34 L26 34 L26 32 L34 32 L34 18Z" fill="#7fb6b6"/>
<path d="M14 26 L18 26 L18 22 L14 22Z" fill="#8a8a8a"/><path d="M5 32 L14 32 L14 35 L7 35Z" fill="#9a9a9a"/>
<rect x="10" y="4" width="2" height="3" fill="#9fe3ff"/><rect x="23" y="4" width="2" height="3" fill="#9fe3ff"/><rect x="11" y="12" width="2" height="4" fill="#9fe3ff"/><rect x="24" y="13" width="2" height="4" fill="#9fe3ff"/><rect x="7" y="24" width="2" height="3" fill="#9fe3ff"/><rect x="28" y="25" width="2" height="3" fill="#9fe3ff"/><rect x="15" y="16" width="3" height="6" fill="#8a8a8a"/></svg>
<svg style="left:13px;top:140px;" width="13" height="13" viewBox="0 0 13 13"><rect x="0.5" y="0.5" width="12" height="12" fill="#f4f4f4" stroke="#b9c4d0"/><path d="M3 10.5 C3 5.5 5 4.5 7 4.5 L7 2.5 L11.5 5.5 L7 8.5 L7 6.5 C5.5 6.5 4.5 7 3 10.5Z" fill="#1f5fc4"/></svg>
<span style="left:36px;top:155.84px;font-size:12px;line-height:16px;color:#fff;letter-spacing:-0.004px;left:14.0px;text-shadow:0 1px 2px #000,0 0 2px #000;">Replace</span>
<span style="left:36px;top:170.84px;font-size:12px;line-height:16px;color:#fff;letter-spacing:-0.157px;left:4.0px;text-shadow:0 1px 2px #000,0 0 2px #000;">Studio Pro...</span>
<svg style="left:238px;top:8px;" width="46" height="46" viewBox="0 0 46 46"><defs><radialGradient id="mpe" cx="0.4" cy="0.3" r="0.8"><stop offset="0" stop-color="#3a6fd8"/><stop offset="0.6" stop-color="#173f9f"/><stop offset="1" stop-color="#0b2a78"/></radialGradient></defs>
<circle cx="23" cy="22" r="21.8" fill="#dfe4ea"/><circle cx="23" cy="22" r="20" fill="#f7f9fb"/><circle cx="23" cy="22" r="17.2" fill="url(#mpe)"/>
<path d="M6.5 19 A17 17 0 0 1 34 9 Q20 10 6.5 19Z" fill="#7fa4ea" opacity=".75"/>
<path d="M12.5 21 A10.5 10.5 0 0 1 28 12.5 L30 9.5 L33.5 20 L22.5 19.5 L25 16.5 A6.5 6.5 0 0 0 17 22Z" fill="#eef3fb"/>
<path d="M33.5 23 A10.5 10.5 0 0 1 18 31.5 L16 34.5 L12.5 24 L23.500 24.5 L21 27.5 A6.5 6.500 0 0 0 29 22Z" fill="#cfdcf2"/></svg>
<svg style="left:239px;top:43px;" width="12" height="12" viewBox="0 0 12 12"><rect x="0.5" y="0.5" width="11" height="11" fill="#f4f4f4" stroke="#b9c4d0"/><path d="M3 9.5 C3 5.5 5 4.5 7 4.5 L7 2.5 L10.5 5.5 L7 8.5 L7 6.5 C5.5 6.5 4.5 7 3 9.5Z" fill="#1f5fc4"/></svg>
<span style="left:261px;top:57.84px;font-size:12px;line-height:16px;color:#fff;letter-spacing:-0.155px;left:227.5px;text-shadow:0 1px 2px #000,0 0 2px #000;">MyPhoneE...</span>
<svg style="left:316px;top:8px;" width="44" height="46" viewBox="0 0 44 46"><g stroke="#0a1a24" stroke-width="1.2">
<path d="M14 3 L16.500 7 M30 3 L27.500 7" fill="none"/>
<path d="M11 15 A11 10 0 0 1 33 15Z" fill="#1ba4e6"/>
<rect x="11" y="16.2" width="22" height="19" rx="1.5" fill="#1ba4e6"/>
<rect x="5" y="16.500" width="4.600" height="13" rx="2.300" fill="#1ba4e6"/><rect x="34.400" y="16.500" width="4.600" height="13" rx="2.300" fill="#1ba4e6"/>
<rect x="14.500" y="34" width="5" height="9" rx="2.300" fill="#1ba4e6"/><rect x="24.500" y="34" width="5" height="9" rx="2.300" fill="#1ba4e6"/></g>
<rect x="11.600" y="30" width="20.800" height="5" fill="#1ba4e6"/>
<circle cx="17.500" cy="10.500" r="1.100" fill="#0a1a24"/><circle cx="26.500" cy="10.500" r="1.100" fill="#0a1a24"/>
<g fill="#46d433" stroke="#1c7a22" stroke-width=".5"><circle cx="22" cy="25" r="5.800"/>
<rect x="20.700" y="17.300" width="2.600" height="3"/><rect x="20.700" y="29.700" width="2.600" height="3"/><rect x="14.300" y="23.700" width="3" height="2.600"/><rect x="26.700" y="23.700" width="3" height="2.600"/>
<rect x="20.700" y="17.300" width="2.600" height="3" transform="rotate(45 22 25)"/><rect x="20.700" y="17.300" width="2.600" height="3" transform="rotate(135 22 25)"/><rect x="20.700" y="17.300" width="2.600" height="3" transform="rotate(225 22 25)"/><rect x="20.700" y="17.300" width="2.600" height="3" transform="rotate(315 22 25)"/></g>
<circle cx="22" cy="25" r="2.600" fill="#1ba4e6" stroke="#1c7a22" stroke-width=".6"/></svg>
<svg style="left:313px;top:43px;" width="12" height="12" viewBox="0 0 12 12"><rect x="0.5" y="0.5" width="11" height="11" fill="#f4f4f4" stroke="#b9c4d0"/><path d="M3 9.5 C3 5.5 5 4.5 7 4.5 L7 2.5 L10.5 5.5 L7 8.5 L7 6.5 C5.5 6.5 4.5 7 3 9.5Z" fill="#1f5fc4"/></svg>
<span style="left:337px;top:57.84px;font-size:12px;line-height:16px;color:#fff;letter-spacing:-0.307px;left:303.0px;text-shadow:0 1px 2px #000,0 0 2px #000;">ADBAppCo...</span>
<svg style="left:387px;top:6px;" width="49" height="50" viewBox="0 0 49 50"><circle cx="24.500" cy="25" r="24.300" fill="#e5574c"/>
<path d="M34 10.500 A9.500 9.500 0 0 0 22.500 22.500 L9.500 35.500 A3.800 3.800 0 0 0 15 41 L28 28 A9.500 9.500 0 0 0 40 16.500 L34.500 22 L29.500 20.500 L28.500 16Z" fill="#e9e6e4"/>
<path d="M9.500 35.500 L22.500 22.500 L25 25 L12 38Z" fill="#fbfaf9" opacity=".8"/></svg>
<svg style="left:388px;top:43px;" width="12" height="12" viewBox="0 0 12 12"><rect x="0.5" y="0.5" width="11" height="11" fill="#f4f4f4" stroke="#b9c4d0"/><path d="M3 9.5 C3 5.5 5 4.5 7 4.5 L7 2.5 L10.5 5.5 L7 8.5 L7 6.5 C5.5 6.5 4.5 7 3 9.5Z" fill="#1f5fc4"/></svg>
<span style="left:411px;top:57.84px;font-size:12px;line-height:16px;color:#fff;letter-spacing:-0.560px;left:392.0px;text-shadow:0 1px 2px #000,0 0 2px #000;">adbGUI</span>
<svg style="left:1217px;top:890px;" width="42" height="46" viewBox="0 0 42 46"><path d="M3 8 L22 2.500 L40 8 L35 43 L9 43Z" fill="#cfd6da" opacity=".55"/>
<path d="M3 8 L22 13 L40 8 L22 2.500Z" fill="#eef2f4" opacity=".9"/><path d="M5.500 8 L22 11.500 L37.500 8 L22 4.300Z" fill="#aab5ba" opacity=".75"/>
<path d="M3 8 L22 13 L22 44 L9 43Z" fill="#d5dde0" opacity=".6"/>
<path d="M22 13 L40 8 L35 43 L22 44Z" fill="#e6ecee" opacity=".62"/>
<path d="M9.500 35 L22 37.500 L34.500 35 L35 43 L22 44 L9 43Z" fill="#f8fafb" opacity=".7"/>
<g fill="#1b8ef2"><path d="M16.500 22 L20.500 17.500 L24 21.500 L22 21.800 L22 25 L19 25Z"/><path d="M26 21.500 L29 27 L25 29 L25 27 L22.500 27 L24 24Z"/><path d="M15.500 25 L20 26 L19 28 L22 30 L17 31.500 L13.500 27.500Z"/></g></svg>
<span style="left:1237px;top:939.84px;font-size:12px;line-height:16px;color:#fff;letter-spacing:0.040px;left:1214.0px;text-shadow:0 1px 2px #000,0 0 2px #000;">Корзина</span>
<div style="left:5px;top:195px;width:1084px;height:789px;background:#f0f0f0;border:1px solid #5a5a5a;box-shadow:0 0 12px rgba(0,0,0,.5);"></div>
<div style="left:6px;top:196px;width:1082px;height:30px;background:#fff;"></div>
<svg style="left:13px;top:201px;" width="17" height="18" viewBox="0 0 17 18"><defs><radialGradient id="tcg" cx=".4" cy=".3" r=".75"><stop offset="0" stop-color="#bfe4fb"/><stop offset=".45" stop-color="#3f97dc"/><stop offset="1" stop-color="#1a55b8"/></radialGradient></defs><ellipse cx="8.500" cy="16" rx="6.500" ry="1.400" fill="#7fb2e8" opacity=".8"/><circle cx="8.500" cy="8" r="7.300" fill="url(#tcg)"/><text x="2.600" y="9.500" font-family="Liberation Sans, sans-serif" font-size="7.500" font-weight="700" font-style="italic" fill="#1f8a2a">T</text><text x="6.800" y="12.300" font-family="Liberation Sans, sans-serif" font-size="9" font-weight="700" font-style="italic" fill="#1f8a2a">c</text></svg>
<span style="left:34px;top:202.84px;font-size:12px;line-height:16px;color:#8c8c8c;letter-spacing:-0.085px;">Total Commander 10.00 - Ustav fyziky kondenzovanych latek</span>
<div style="left:6px;top:226px;width:1082px;height:20px;background:#fff;"></div>
<span style="left:12px;top:227.84px;font-size:12px;line-height:16px;color:#5a5a5a;letter-spacing:-0.028px;">Файлы</span>
<span style="left:64px;top:227.84px;font-size:12px;line-height:16px;color:#5a5a5a;letter-spacing:-0.288px;">Выделение</span>
<span style="left:139px;top:227.84px;font-size:12px;line-height:16px;color:#5a5a5a;letter-spacing:0.022px;">Команды</span>
<span style="left:204px;top:227.84px;font-size:12px;line-height:16px;color:#5a5a5a;letter-spacing:-0.426px;">Сеть</span>
<span style="left:243px;top:227.84px;font-size:12px;line-height:16px;color:#5a5a5a;letter-spacing:-0.573px;">Вид</span>
<span style="left:277px;top:227.84px;font-size:12px;line-height:16px;color:#5a5a5a;letter-spacing:0.039px;">Конфигурация</span>
<span style="left:372px;top:227.84px;font-size:12px;line-height:16px;color:#5a5a5a;letter-spacing:0.076px;">Запуск</span>
<div style="left:6px;top:245px;width:1082px;height:31px;background:#fff;border-top:1px solid #e4e4e4;border-bottom:1px solid #a0a0a0;"></div>
<div style="left:42px;top:247px;width:27px;height:27px;background:#e4e4e4;border:1px solid #c6c6c6;"></div>
<svg style="left:42px;top:247px;" width="27" height="27" viewBox="0 0 27 27"><defs><linearGradient id="rfg" x1="0" y1="0" x2="0" y2="1"><stop offset="0" stop-color="#8fe23a"/><stop offset="1" stop-color="#4fb812"/></linearGradient></defs><path d="M5 9.800 C6.500 4 12 1.800 17.200 3.600 L20 5 L23.500 1.500 L23.500 11.600 L14.300 11.400 L17.300 8.400 C14 6.400 9.800 7 8.300 10.200Z" fill="url(#rfg)" stroke="#3d9a10" stroke-width=".7"/><g transform="rotate(180 13.500 13.600)"><path d="M5 9.800 C6.500 4 12 1.800 17.200 3.600 L20 5 L23.500 1.500 L23.500 11.600 L14.300 11.400 L17.300 8.400 C14 6.400 9.800 7 8.300 10.200Z" fill="#63c81f" stroke="#3d9a10" stroke-width=".7"/></g></svg>
<div style="left:116px;top:247px;width:27px;height:27px;background:#e4e4e4;border:1px solid #c6c6c6;"></div>
<svg style="left:117px;top:248px;" width="25" height="25" viewBox="1 1 21.5 21.5"><g fill="#fff" stroke="#3a56b8"><rect x="2.5" y="2.5" width="4" height="5"/><rect x="2.5" y="10.5" width="4" height="5"/><rect x="2.5" y="17.5" width="4" height="4"/></g><path d="M10 5 H21 M10 13 H14 M10 20 H17" stroke="#9a9a9a"/><path d="M9 5 L12 4 L22 17 L18 20Z" fill="#d8262c"/><path d="M9 5 L12 4 L13 7 L10.5 8Z" fill="#f0c27a"/><path d="M9 5 L10.5 4.6 L10 6.2Z" fill="#222"/><path d="M18 20 L22 17 L22.5 21.5Z" fill="#f2a6a6"/></svg>
<div style="left:190px;top:247px;width:27px;height:27px;background:#cde6f7;border:1px solid #1f66b0;"></div>
<svg style="left:191px;top:248px;" width="25" height="25" viewBox="1 1 21.5 21.5"><path d="M12 3 L21 2 L21 17 L12 18Z" fill="#f1d98a"/><path d="M8 5 L18 3.5 L18 19 L8 20Z" fill="#f5df8e" stroke="#dcc26a" stroke-width=".6"/><path d="M4 7 L14 5.5 L14 21 L4 22Z" fill="#f8e79e" stroke="#dcc26a" stroke-width=".6"/><path d="M7 13 L12.5 22 H1.5Z" fill="#ffd91a" stroke="#4a4200" stroke-width=".9"/><path d="M7 16 V19.3 M7 20.3 V21.2" stroke="#000" stroke-width="1.3"/></svg>
<div style="left:264px;top:247px;width:27px;height:27px;background:#e4e4e4;border:1px solid #c6c6c6;"></div>
<svg style="left:265px;top:248px;" width="25" height="25" viewBox="1 1 21.5 21.5"><path d="M3 8 L5 3 H9 L10 8 V19 H2 V12Z" fill="#5c5c5c"/><path d="M20 8 L18 3 H14 L13 8 V19 H21 V12Z" fill="#5c5c5c"/><rect x="9.5" y="7" width="4" height="7" fill="#6a6a6a"/><rect x="4" y="4" width="4" height="2" fill="#9a9a9a"/><rect x="15" y="4" width="4" height="2" fill="#9a9a9a"/><path d="M3 10 H9 V18 H3Z M14 10 H20 V18 H14Z" fill="#3d3d3d"/><path d="M4.500 11 V17 M15.500 11 V17" stroke="#a5a5a5" stroke-width="1.400"/></svg>
<div style="left:454px;top:247px;width:27px;height:27px;background:#e4e4e4;border:1px solid #c6c6c6;"></div>
<svg style="left:455px;top:248px;" width="25" height="25" viewBox="1 1 21.5 21.5"><g fill="#fff" stroke="#3f5fae"><rect x="12.5" y="2.5" width="8" height="7"/><rect x="2.5" y="13.5" width="8" height="7"/></g><path d="M3 9 A4 4 0 0 1 9 4 L10 2 L11 8 L5 7.5 L7 6 A2 2 0 0 0 5 9Z" fill="#2fae1e" stroke="#1c7a12" stroke-width=".6"/><path d="M20 14 A4 4 0 0 1 14 19 L13 21 L12 15 L18 15.5 L16 17 A2 2 0 0 0 18 14Z" fill="#2fae1e" stroke="#1c7a12" stroke-width=".6"/></svg>
<div style="left:6px;top:277px;width:1082px;height:29px;background:#fff;"></div>
<div style="left:6px;top:280px;width:36px;height:22px;background:#cce4f7;border:1px solid #99d1ff;"></div>
<svg style="left:10px;top:288px;" width="18" height="12" viewBox="0 0 18 12"><path d="M3 1 H15 L17.500 5 H0.500Z" fill="#f6f6f6" stroke="#9c9c9c" stroke-width=".8"/><rect x="0.500" y="5" width="17" height="6" rx="1.500" fill="#d4d4d4" stroke="#858585" stroke-width=".9"/><rect x="1.500" y="6" width="15" height="1.500" fill="#ececec"/><rect x="13" y="7.300" width="2.600" height="2.600" fill="#35b535"/></svg>
<svg style="left:48px;top:288px;" width="18" height="12" viewBox="0 0 18 12"><path d="M3 1 H15 L17.500 5 H0.500Z" fill="#f6f6f6" stroke="#9c9c9c" stroke-width=".8"/><rect x="0.500" y="5" width="17" height="6" rx="1.500" fill="#d4d4d4" stroke="#858585" stroke-width=".9"/><rect x="1.500" y="6" width="15" height="1.500" fill="#ececec"/><rect x="13" y="7.300" width="2.600" height="2.600" fill="#35b535"/></svg>
<svg style="left:86px;top:288px;" width="18" height="12" viewBox="0 0 18 12"><path d="M3 1 H15 L17.500 5 H0.500Z" fill="#f6f6f6" stroke="#9c9c9c" stroke-width=".8"/><rect x="0.500" y="5" width="17" height="6" rx="1.500" fill="#d4d4d4" stroke="#858585" stroke-width=".9"/><rect x="1.500" y="6" width="15" height="1.500" fill="#ececec"/><rect x="13" y="7.300" width="2.600" height="2.600" fill="#35b535"/></svg>
<span style="left:30px;top:283.00px;font-size:13px;line-height:17px;color:#000;-webkit-text-stroke:0.3px #000;">c</span>
<span style="left:67px;top:283.00px;font-size:13px;line-height:17px;color:#000;-webkit-text-stroke:0.3px #000;">d</span>
<span style="left:105px;top:283.00px;font-size:13px;line-height:17px;color:#000;-webkit-text-stroke:0.3px #000;">e</span>
<svg style="left:125px;top:284px;" width="14" height="14" viewBox="0 0 14 14"><circle cx="7" cy="7" r="6.5" fill="#2f74c9"/><path d="M3 3 Q6 1 8 3 Q9 5 6 6 Q4 8 5 10 Q3 9 1.5 7 Q1.5 4 3 3Z M9 7 Q12 6 12.5 8 Q11 11 9 12 Q8 9 9 7Z" fill="#3fa53f"/><path d="M2 4 A6 6 0 0 1 12 4 Q7 1.5 2 4Z" fill="#9cc8f0" opacity=".7"/></svg>
<span style="left:143px;top:283.00px;font-size:13px;line-height:17px;color:#000;-webkit-text-stroke:0.3px #000;">\</span>
<span style="left:164px;top:283.00px;font-size:13px;line-height:17px;color:#000;-webkit-text-stroke:0.3px #000;">\</span>
<span style="left:182px;top:283.00px;font-size:13px;line-height:17px;color:#000;-webkit-text-stroke:0.3px #000;">..</span>
<span style="left:198px;top:283.00px;font-size:13px;line-height:17px;color:#000;letter-spacing:0.422px;-webkit-text-stroke:0.3px #000;">[c]</span>
<span style="left:217px;top:283.00px;font-size:13px;line-height:17px;color:#000;letter-spacing:-0.435px;-webkit-text-stroke:0.3px #000;">211 736 020 Кб из 234 428 480 Кб свободно</span>
<div style="left:6px;top:306px;width:1082px;height:1px;background:#dcdcdc;"></div>
<div style="left:6px;top:307px;width:1082px;height:24px;background:#f0f0f0;"></div>
<div style="left:8px;top:311px;width:77px;height:20px;background:#f0f0f0;border:1px solid #d9d9d9;border-bottom:none;"></div>
<span style="left:14px;top:313.00px;font-size:13px;line-height:17px;color:#000;letter-spacing:-0.675px;-webkit-text-stroke:0.3px #000;">*DOWNlods</span>
<div style="left:85px;top:311px;width:54px;height:20px;background:#f0f0f0;border:1px solid #d9d9d9;border-bottom:none;"></div>
<span style="left:92px;top:313.00px;font-size:13px;line-height:17px;color:#000;letter-spacing:0.099px;-webkit-text-stroke:0.3px #000;">555</span>
<div style="left:139px;top:311px;width:102px;height:20px;background:#f0f0f0;border:1px solid #d9d9d9;border-bottom:none;"></div>
<span style="left:167px;top:313.00px;font-size:13px;line-height:17px;color:#000;letter-spacing:-0.281px;-webkit-text-stroke:0.3px #000;">*Documents</span>
<div style="left:241px;top:311px;width:52px;height:20px;background:#f0f0f0;border:1px solid #d9d9d9;border-bottom:none;"></div>
<span style="left:247px;top:313.00px;font-size:13px;line-height:17px;color:#000;letter-spacing:-0.995px;-webkit-text-stroke:0.3px #000;">*Games</span>
<svg style="left:148px;top:313px;" width="12" height="15" viewBox="0 0 12 15"><path d="M0.5 0.5 L8 0.5 L11.5 4 L11.5 14.5 L0.5 14.5Z" fill="#fff" stroke="#8a9aaa"/><path d="M2.5 4.5 H6 M2.5 6.5 H9.5 M2.5 8.5 H9.5 M2.5 10.5 H9.5 M2.5 12.5 H9.5" stroke="#3a77c2" stroke-width="1"/></svg>
<div style="left:293px;top:308px;width:79px;height:23px;background:#fff;border:1px solid #d9d9d9;border-bottom:none;"></div>
<span style="left:301px;top:310.00px;font-size:13px;line-height:17px;color:#000;letter-spacing:-0.446px;-webkit-text-stroke:0.3px #000;">Accessibility</span>
<div style="left:372px;top:311px;width:62px;height:20px;background:#f0f0f0;border:1px solid #d9d9d9;border-bottom:none;"></div>
<span style="left:378px;top:313.00px;font-size:13px;line-height:17px;color:#000;letter-spacing:-0.602px;-webkit-text-stroke:0.3px #000;">System32</span>
<div style="left:434px;top:311px;width:56px;height:20px;background:#f0f0f0;border:1px solid #d9d9d9;border-bottom:none;"></div>
<span style="left:442px;top:313.00px;font-size:13px;line-height:17px;color:#000;letter-spacing:-0.273px;-webkit-text-stroke:0.3px #000;">#KiNoo</span>
<div style="left:6px;top:331px;width:538px;height:19px;background:#9cb8de;"></div>
<svg style="left:9px;top:339px;" width="11" height="7" viewBox="0 0 11 7"><path d="M0 0 H11 L5.5 6Z" fill="#000"/></svg>
<svg style="left:27px;top:334px;" width="6" height="11" viewBox="0 0 6 11"><path d="M6 0 V11 L0 5.5Z" fill="#000"/></svg>
<span style="left:37px;top:332.00px;font-size:13px;line-height:17px;color:#000;letter-spacing:-0.242px;-webkit-text-stroke:0.3px #000;">\AppData\Roaming\Microsoft\Windows\Start Menu\Programs\Accessibility\*.*</span>
<div style="left:6px;top:350px;width:538px;height:19px;background:#fff;border-bottom:1px solid #a0a0a0;"></div>
<div style="left:6px;top:350px;width:317px;height:18px;background:#bcdcf4;"></div>
<svg style="left:8px;top:355px;" width="8" height="10" viewBox="0 0 8 10"><path d="M4 0 L8 4.5 H5.2 V10 H2.8 V4.5 H0Z" fill="#000"/></svg>
<span style="left:18px;top:351.00px;font-size:13px;line-height:17px;color:#000;letter-spacing:-0.443px;-webkit-text-stroke:0.3px #000;">Имя</span>
<div style="left:322px;top:351px;width:1px;height:17px;background:#d0d0d0;"></div>
<div style="left:351px;top:351px;width:1px;height:17px;background:#d0d0d0;"></div>
<div style="left:420px;top:351px;width:1px;height:17px;background:#d0d0d0;"></div>
<span style="left:324px;top:351.00px;font-size:13px;line-height:17px;color:#000;letter-spacing:-0.557px;-webkit-text-stroke:0.3px #000;">Тип</span>
<span style="left:354px;top:351.00px;font-size:13px;line-height:17px;color:#000;letter-spacing:-0.615px;-webkit-text-stroke:0.3px #000;">Размер</span>
<span style="left:424px;top:351.00px;font-size:13px;line-height:17px;color:#000;letter-spacing:-0.883px;-webkit-text-stroke:0.3px #000;">Дата модиф</span>
<div style="left:6px;top:369px;width:538px;height:530px;background:#fff;"></div>
<svg style="left:8px;top:373px;" width="17" height="10" viewBox="0 0 17 10"><path d="M0 3 H9 V0 L17 5 L9 10 V7 H0Z" fill="#37b32a"/><path d="M0 3 H9 V0 L17 5" fill="none" stroke="#8fe07a" stroke-width="1"/></svg>
<span style="left:27px;top:368.00px;font-size:13px;line-height:17px;color:#000;-webkit-text-stroke:0.3px #000;">..</span>
<span style="left:27px;top:387.00px;font-size:13px;line-height:17px;color:#000;letter-spacing:-0.507px;-webkit-text-stroke:0.3px #000;">desktop</span>
<span style="left:322px;top:387.00px;font-size:13px;line-height:17px;color:#000;letter-spacing:-0.005px;-webkit-text-stroke:0.3px #000;">ini</span>
<span style="left:417px;top:387.00px;font-size:13px;line-height:17px;color:#000;letter-spacing:-0.234px;left:396px;-webkit-text-stroke:0.3px #000;">568</span>
<span style="left:422px;top:387.00px;font-size:13px;line-height:17px;color:#000;letter-spacing:-0.308px;-webkit-text-stroke:0.3px #000;">12.02.2022</span>
<span style="left:27px;top:405.00px;font-size:13px;line-height:17px;color:#000;letter-spacing:-0.076px;-webkit-text-stroke:0.3px #000;">Magnify</span>
<span style="left:322px;top:405.00px;font-size:13px;line-height:17px;color:#000;letter-spacing:-0.542px;-webkit-text-stroke:0.3px #000;">lnk</span>
<span style="left:417px;top:405.00px;font-size:13px;line-height:17px;color:#000;letter-spacing:-0.709px;left:388px;-webkit-text-stroke:0.3px #000;">1 106</span>
<span style="left:422px;top:405.00px;font-size:13px;line-height:17px;color:#000;letter-spacing:-0.308px;-webkit-text-stroke:0.3px #000;">15.09.2018</span>
<span style="left:27px;top:423.00px;font-size:13px;line-height:17px;color:#000;letter-spacing:-0.336px;-webkit-text-stroke:0.3px #000;">Narrator</span>
<span style="left:322px;top:423.00px;font-size:13px;line-height:17px;color:#000;letter-spacing:-0.542px;-webkit-text-stroke:0.3px #000;">lnk</span>
<span style="left:417px;top:423.00px;font-size:13px;line-height:17px;color:#000;letter-spacing:-0.709px;left:388px;-webkit-text-stroke:0.3px #000;">1 108</span>
<span style="left:422px;top:423.00px;font-size:13px;line-height:17px;color:#000;letter-spacing:-0.308px;-webkit-text-stroke:0.3px #000;">15.09.2018</span>
<span style="left:27px;top:441.00px;font-size:13px;line-height:17px;color:#000;letter-spacing:-0.674px;-webkit-text-stroke:0.3px #000;">On-Screen Keyboard</span>
<span style="left:322px;top:441.00px;font-size:13px;line-height:17px;color:#000;letter-spacing:-0.542px;-webkit-text-stroke:0.3px #000;">lnk</span>
<span style="left:417px;top:441.00px;font-size:13px;line-height:17px;color:#000;letter-spacing:-0.709px;left:388px;-webkit-text-stroke:0.3px #000;">1 106</span>
<span style="left:422px;top:441.00px;font-size:13px;line-height:17px;color:#000;letter-spacing:-0.308px;-webkit-text-stroke:0.3px #000;">15.09.2018</span>
<span style="left:486px;top:387.00px;font-size:13px;line-height:17px;color:#000;-webkit-text-stroke:0.3px #000;">0</span>
<svg style="left:9px;top:388px;" width="15" height="17" viewBox="0 0 15 17"><path d="M3.5 0.5 H11 L14.5 4 V16.5 H3.5Z" fill="#fbfbfb" stroke="#b9b9b9"/><path d="M0.5 8 H5 V14 H0.5Z" fill="#f3f3f3" stroke="#c9c9c9"/><circle cx="7" cy="6" r="1.3" fill="#e06060"/><circle cx="6" cy="11" r="1.2" fill="#e06060"/><path d="M7 3 V14" stroke="#e9a0a0" stroke-width=".8"/></svg>
<svg style="left:8px;top:407px;" width="18" height="17" viewBox="0 0 18 17"><rect x="4" y="0.5" width="13.5" height="10" fill="#4f9fe6" stroke="#2d6db8"/><rect x="5.2" y="1.7" width="11" height="3" fill="#9ccdf5"/><circle cx="5" cy="10" r="4" fill="#dfeefa" stroke="#8a98a8" stroke-width="1.2"/><path d="M8 13 L11 16.5" stroke="#8a98a8" stroke-width="2"/></svg>
<svg style="left:9px;top:429px;" width="11" height="11" viewBox="0 0 11 11"><rect x="0.5" y="0.5" width="10" height="10" fill="#fff" stroke="#7f8da3"/><path d="M2.5 8.5 C2.5 5 4 4.2 6 4.2 L6 2.2 L9.2 5 L6 7.8 L6 6 C4.5 6 3.5 6.5 2.5 8.5Z" fill="#123f9c"/></svg>
<svg style="left:9px;top:447px;" width="11" height="11" viewBox="0 0 11 11"><rect x="0.5" y="0.5" width="10" height="10" fill="#fff" stroke="#7f8da3"/><path d="M2.5 8.5 C2.5 5 4 4.2 6 4.2 L6 2.2 L9.2 5 L6 7.8 L6 6 C4.5 6 3.5 6.5 2.5 8.5Z" fill="#123f9c"/></svg>
<div style="left:6px;top:899px;width:538px;height:16px;background:#f0f0f0;"></div>
<div style="left:24px;top:899px;width:494px;height:16px;background:#cdcdcd;"></div>
<svg style="left:11px;top:902px;" width="8" height="10" viewBox="0 0 8 10"><path d="M6.5 1 L2 5 L6.5 9" stroke="#4a4a4a" stroke-width="2" fill="none"/></svg>
<svg style="left:531px;top:902px;" width="8" height="10" viewBox="0 0 8 10"><path d="M1.5 1 L6 5 L1.5 9" stroke="#4a4a4a" stroke-width="2" fill="none"/></svg>
<div style="left:6px;top:915px;width:538px;height:20px;background:#f7f7f7;border-top:1px solid #e3e3e3;border-bottom:1px solid #dadada;"></div>
<span style="left:9px;top:916.00px;font-size:13px;line-height:17px;color:#000;letter-spacing:-0.306px;-webkit-text-stroke:0.3px #000;">0 Кб из 3 Кб, файлов: 0 из 4</span>
<div style="left:551px;top:350px;width:537px;height:549px;background:#fff;"></div>
<div style="left:551px;top:899px;width:537px;height:16px;background:#f0f0f0;"></div>
<div style="left:568px;top:899px;width:322px;height:16px;background:#cdcdcd;"></div>
<svg style="left:555px;top:902px;" width="8" height="10" viewBox="0 0 8 10"><path d="M6.5 1 L2 5 L6.5 9" stroke="#4a4a4a" stroke-width="2" fill="none"/></svg>
<svg style="left:1075px;top:902px;" width="8" height="10" viewBox="0 0 8 10"><path d="M1.5 1 L6 5 L1.5 9" stroke="#4a4a4a" stroke-width="2" fill="none"/></svg>
<div style="left:551px;top:915px;width:537px;height:20px;background:#f7f7f7;border-top:1px solid #e3e3e3;border-bottom:1px solid #dadada;"></div>
<span style="left:553px;top:916.00px;font-size:13px;line-height:17px;color:#000;letter-spacing:-0.592px;-webkit-text-stroke:0.3px #000;">0 Кб из 1 Кб, файлов: 0 из 1</span>
<div style="left:372px;top:939px;width:716px;height:23px;background:#fff;border:1px solid #6e6e6e;"></div>
<span style="left:9px;top:941.00px;font-size:13px;line-height:17px;color:#000;letter-spacing:-0.231px;-webkit-text-stroke:0.3px #000;">Roaming\Microsoft\Windows\Start Menu\Programs\Accessibility&gt;</span>
<svg style="left:1073px;top:946px;" width="12" height="8" viewBox="0 0 12 8"><path d="M1 1.5 L6 6.5 L11 1.5" stroke="#444" stroke-width="1.3" fill="none"/></svg>
<div style="left:6px;top:963px;width:1082px;height:21px;background:#f0f0f0;"></div>
<span style="left:82px;top:967.00px;font-size:13px;line-height:17px;color:#000;letter-spacing:-0.469px;left:45.5px;-webkit-text-stroke:0.3px #000;">F3 Просмотр</span>
<span style="left:236px;top:967.00px;font-size:13px;line-height:17px;color:#000;letter-spacing:-0.634px;left:207.5px;-webkit-text-stroke:0.3px #000;">F4 Правка</span>
<span style="left:391px;top:967.00px;font-size:13px;line-height:17px;color:#000;letter-spacing:-0.501px;left:345.5px;-webkit-text-stroke:0.3px #000;">F5 Копирование</span>
<span style="left:544px;top:967.00px;font-size:13px;line-height:17px;color:#000;letter-spacing:-0.746px;left:496.5px;-webkit-text-stroke:0.3px #000;">F6 Перемещение</span>
<span style="left:698px;top:967.00px;font-size:13px;line-height:17px;color:#000;letter-spacing:-0.805px;left:669.0px;-webkit-text-stroke:0.3px #000;">F7 Каталог</span>
<span style="left:852px;top:967.00px;font-size:13px;line-height:17px;color:#000;letter-spacing:-0.848px;left:818.0px;-webkit-text-stroke:0.3px #000;">F8 Удаление</span>
<span style="left:1009px;top:967.00px;font-size:13px;line-height:17px;color:#000;letter-spacing:-0.454px;left:971.5px;-webkit-text-stroke:0.3px #000;">Alt+F4 Выход</span>
<div style="left:158px;top:967px;width:1px;height:17px;background:#a0a0a0;"></div>
<div style="left:312px;top:967px;width:1px;height:17px;background:#a0a0a0;"></div>
<div style="left:466px;top:967px;width:1px;height:17px;background:#a0a0a0;"></div>
<div style="left:620px;top:967px;width:1px;height:17px;background:#a0a0a0;"></div>
<div style="left:774px;top:967px;width:1px;height:17px;background:#a0a0a0;"></div>
<div style="left:929px;top:967px;width:1px;height:17px;background:#a0a0a0;"></div>
<div style="left:489px;top:5px;width:784px;height:632px;background:#fff;border:1px solid #6b6b6b;box-shadow:0 0 14px rgba(0,0,0,.55);"></div>
<svg style="left:499px;top:12px;" width="13" height="15" viewBox="0 0 13.5 16"><path d="M1 1 H9.5 L12.5 4 V15 H1Z" fill="#ffe9a2"/><path d="M1 1 H9.5 L12.5 4 V15 H1Z" fill="none" stroke="#f1d27c" stroke-width=".8"/><path d="M9.5 8 H12.5 V15 H9.5Z" fill="#f7d26a"/></svg>
<div style="left:520px;top:13px;width:1px;height:15px;background:#b5b5b5;"></div>
<svg style="left:531px;top:11px;" width="14" height="17" viewBox="0 0 14 17"><path d="M0.5 0.5 H9 L13.5 5 V16.5 H0.5Z" fill="#fff" stroke="#7d7d7d"/><path d="M9 0.5 V5 H13.5" fill="none" stroke="#7d7d7d"/><path d="M3 9.5 L5.5 12.5 L11 6.5" fill="none" stroke="#e0572a" stroke-width="1.6"/></svg>
<svg style="left:554px;top:12px;" width="13" height="15" viewBox="0 0 13.5 16"><path d="M1 1 H9.5 L12.5 4 V15 H1Z" fill="#ffe9a2"/><path d="M1 1 H9.5 L12.5 4 V15 H1Z" fill="none" stroke="#f1d27c" stroke-width=".8"/><path d="M9.5 8 H12.5 V15 H9.5Z" fill="#f7d26a"/></svg>
<svg style="left:575px;top:16px;" width="8" height="7" viewBox="0 0 8 7"><rect x="0" y="0" width="8" height="1.3" fill="#111"/><path d="M0 3 H8 L4 7Z" fill="#111"/></svg>
<div style="left:590px;top:13px;width:1px;height:15px;background:#b5b5b5;"></div>
<span style="left:598px;top:12.84px;font-size:12px;line-height:16px;color:#9a9a9a;letter-spacing:-0.117px;">C:\Users\Professional\AppD...</span>
<div style="left:758px;top:8px;width:185px;height:27px;background:#fbcdb4;"></div>
<span style="left:850px;top:13.84px;font-size:12px;line-height:16px;color:#4a4a4a;letter-spacing:-0.272px;left:818.0px;">Управление</span>
<div style="left:945px;top:8px;width:167px;height:27px;background:#e6c8f8;"></div>
<span style="left:1028px;top:13.84px;font-size:12px;line-height:16px;color:#4a4a4a;letter-spacing:-0.272px;left:996.0px;">Управление</span>
<div style="left:1154px;top:19px;width:10px;height:1px;background:#8a8a8a;"></div>
<div style="left:1199px;top:14px;width:10px;height:10px;border:1px solid #8a8a8a;"></div>
<svg style="left:1245px;top:14px;" width="11" height="11" viewBox="0 0 11 11"><path d="M0.5 0.5 L10.5 10.5 M10.5 0.5 L0.5 10.5" stroke="#7a7a7a" stroke-width="1"/></svg>
<div style="left:490px;top:35px;width:56px;height:23px;background:#0c40bf;"></div>
<span style="left:517px;top:38.84px;font-size:12px;line-height:16px;color:#fff;letter-spacing:-0.379px;left:503.0px;">Файл</span>
<div style="left:545px;top:35px;width:70px;height:24px;background:#f5f6f7;border:1px solid #dadbdc;border-bottom:none;"></div>
<span style="left:559px;top:38.84px;font-size:12px;line-height:16px;color:#444;letter-spacing:-0.527px;">Главная</span>
<span style="left:631px;top:38.84px;font-size:12px;line-height:16px;color:#222;letter-spacing:-0.527px;">Поделиться</span>
<span style="left:721px;top:38.84px;font-size:12px;line-height:16px;color:#222;letter-spacing:-0.573px;">Вид</span>
<span style="left:772px;top:38.84px;font-size:12px;line-height:16px;color:#222;letter-spacing:-0.364px;">Средства работы с ярлыками</span>
<span style="left:960px;top:38.84px;font-size:12px;line-height:16px;color:#222;letter-spacing:-0.265px;">Средства работы с приложениями</span>
<div style="left:757px;top:37px;width:1px;height:20px;background:#dcdcdc;"></div>
<div style="left:943px;top:37px;width:1px;height:20px;background:#dcdcdc;"></div>
<div style="left:1159px;top:37px;width:1px;height:20px;background:#dcdcdc;"></div>
<svg style="left:1235px;top:44px;" width="10" height="6" viewBox="0 0 10 6"><path d="M0.5 5.5 L5 1 L9.5 5.5" stroke="#9a9a9a" stroke-width="1.2" fill="none"/></svg>
<svg style="left:1254px;top:39px;" width="16" height="16" viewBox="0 0 16 16"><circle cx="8" cy="8" r="7.5" fill="#0f6fd6"/></svg>
<span style="left:1262px;top:41.19px;font-size:11px;line-height:14px;color:#fff;font-weight:700;left:1258.6328125px;">?</span>
<div style="left:490px;top:58px;width:782px;height:93px;background:#f5f6f7;border-top:1px solid #dadbdc;border-bottom:1px solid #dadbdc;"></div>
<div style="left:546px;top:58px;width:68px;height:1px;background:#f5f6f7;"></div>
<svg style="left:543px;top:70px;" width="24" height="24" viewBox="0 0 24 24"><path d="M15 1 L23 9 L20.5 10 L16 14.5 L16.5 19 L13 17.5 L6 10.5 L4.5 7.5 L9 8 L13.5 3.5Z" fill="#a9b9cf"/><path d="M9 14.5 L1 23" stroke="#a9b9cf" stroke-width="2.2"/></svg>
<span style="left:497px;top:99.84px;font-size:12px;line-height:16px;color:#8b8b8b;letter-spacing:-0.169px;">Закрепить на панели</span>
<span style="left:507px;top:112.84px;font-size:12px;line-height:16px;color:#8b8b8b;letter-spacing:-0.310px;">быстрого доступа</span>
<svg style="left:636px;top:68px;" width="25" height="30" viewBox="0 0 25 30"><path d="M0.5 0.5 H10 L14.5 5 V19.5 H0.5Z" fill="#fff" stroke="#9aa3ad"/><path d="M8.5 8.5 H18 L23.5 14 V29.5 H8.5Z" fill="#fff" stroke="#8d97a3"/><path d="M18 8.5 V14 H23.5" fill="none" stroke="#8d97a3"/><path d="M11 16.5 H21 M11 19.5 H21 M11 22.5 H21 M11 25.5 H21 M11 13.5 H16" stroke="#4d8bd6"/><path d="M2.5 6.5 H7 M2.5 9.5 H7 M2.5 12.5 H7" stroke="#9ec0ea"/></svg>
<span style="left:617px;top:99.84px;font-size:12px;line-height:16px;color:#1e1e1e;letter-spacing:-0.163px;">Копировать</span>
<svg style="left:698px;top:67px;" width="24" height="31" viewBox="0 0 24 31"><rect x="1" y="3.5" width="22" height="27" rx="1.5" fill="#8f9db5"/><rect x="3.5" y="6.5" width="17" height="21.5" fill="#f4f7fb"/><rect x="7.5" y="0.8" width="9" height="6" rx="1.2" fill="#6f7e98"/><rect x="9.5" y="2.5" width="5" height="2" fill="#dfe6f0"/><path d="M5.5 11.5 H18.5 M5.5 14.5 H18.5 M5.5 17.5 H18.5 M5.5 20.5 H18.5 M5.5 23.5 H18.5" stroke="#c5d4e8"/></svg>
<span style="left:685px;top:99.84px;font-size:12px;line-height:16px;color:#8b8b8b;letter-spacing:-0.484px;">Вставить</span>
<svg style="left:740px;top:66px;" width="13" height="17" viewBox="0 0 13 17"><path d="M3.5 0.5 L8 10 M9.5 0.5 L5 10" stroke="#6b7a8e" stroke-width="1.3"/><circle cx="3.2" cy="13" r="2.6" fill="none" stroke="#1e74d0" stroke-width="1.5"/><circle cx="9.8" cy="13" r="2.6" fill="none" stroke="#1e74d0" stroke-width="1.5"/></svg>
<svg style="left:738px;top:92px;" width="16" height="10" viewBox="0 0 16 10"><rect x="0.5" y="0.5" width="15" height="9" fill="#cfe3f7" stroke="#8fb5dc"/><path d="M2.5 3 L4.5 7 M5.5 3 L7.5 7 M9 7 H10 M11.5 7 H12.5" stroke="#1b3c78" stroke-width="1.1"/></svg>
<svg style="left:740px;top:110px;" width="13" height="17" viewBox="0 0 13 17"><rect x="0.5" y="2.5" width="12" height="14" rx="1" fill="#97a5bb"/><rect x="2.5" y="5" width="8" height="9.5" fill="#eef2f8"/><rect x="4" y="0.8" width="5" height="3.2" rx=".8" fill="#73839c"/><path d="M4 12 L8 8 M5.5 7.5 H8.5 V10.5" stroke="#3a62a8" stroke-width="1.2" fill="none"/></svg>
<span style="left:587px;top:132.84px;font-size:12px;line-height:16px;color:#4a4a4a;letter-spacing:-0.379px;">Буфер обмена</span>
<div style="left:763px;top:62px;width:1px;height:86px;background:#e2e3e4;"></div>
<svg style="left:773px;top:73px;" width="15" height="18" viewBox="0 0 15 18"><path d="M0.5 0.5 H8 L11 3.5 V17.5 H0.5Z" fill="#ffe9a2" stroke="#f1d27c" stroke-width=".8"/><path d="M14.5 12 H8 M10.5 8.5 L7 12 L10.5 15.5" stroke="#2e7ed6" stroke-width="2.2" fill="none"/></svg>
<span style="left:790px;top:73.84px;font-size:12px;line-height:16px;color:#1e1e1e;letter-spacing:-0.480px;">Переместить в</span>
<svg style="left:871px;top:80px;" width="7" height="4" viewBox="0 0 7 4"><path d="M0.500 0 H6.500 L3.500 3.500Z" fill="#222"/></svg>
<svg style="left:773px;top:102px;" width="15" height="18" viewBox="0 0 15 18"><path d="M0.5 0.5 H8 L11 3.5 V17.5 H0.5Z" fill="#ffe9a2" stroke="#f1d27c" stroke-width=".8"/><path d="M4.5 2.5 H9.5 L12 5 V11.5 H4.5Z" fill="#fff" stroke="#7d8794" stroke-width=".9"/><path d="M7.5 5.5 H12.5 L14.5 7.5 V14.5 H7.5Z" fill="#fff" stroke="#7d8794" stroke-width=".9"/><path d="M9 9.5 H13 M9 11.5 H13" stroke="#7d8794" stroke-width=".8"/></svg>
<span style="left:790px;top:102.84px;font-size:12px;line-height:16px;color:#1e1e1e;letter-spacing:-0.194px;">Копировать в</span>
<svg style="left:866px;top:109px;" width="7" height="4" viewBox="0 0 7 4"><path d="M0.500 0 H6.500 L3.500 3.500Z" fill="#222"/></svg>
<svg style="left:893px;top:74px;" width="14" height="14" viewBox="0 0 14 14"><path d="M1.5 1.5 L12.5 12.5 M12.5 1.5 L1.5 12.5" stroke="#e0162b" stroke-width="3.2"/></svg>
<span style="left:911px;top:73.84px;font-size:12px;line-height:16px;color:#1e1e1e;letter-spacing:-0.547px;">Удалить</span>
<svg style="left:957px;top:80px;" width="7" height="4" viewBox="0 0 7 4"><path d="M0.500 0 H6.500 L3.500 3.500Z" fill="#222"/></svg>
<svg style="left:891px;top:102px;" width="18" height="17" viewBox="0 0 18 17"><rect x="0.5" y="5.5" width="14" height="7" fill="#fff" stroke="#5e7fa8"/><rect x="2.5" y="7.5" width="7" height="3" fill="#2f86dd"/><path d="M12.5 1.5 V15.5 M10 1 H15 M10 16 H15" stroke="#333" stroke-width="1.1"/></svg>
<span style="left:911px;top:102.84px;font-size:12px;line-height:16px;color:#1e1e1e;letter-spacing:-0.230px;">Переименовать</span>
<span style="left:848px;top:132.84px;font-size:12px;line-height:16px;color:#4a4a4a;letter-spacing:-0.038px;">Упорядочить</span>
<div style="left:1006px;top:62px;width:1px;height:86px;background:#e2e3e4;"></div>
<svg style="left:1019px;top:69px;" width="23" height="29" viewBox="0 0 23 29"><path d="M2 2 H11 L14 0.5 L14 27 L2 28.5Z" fill="#f6d566"/><path d="M6 1.5 L18 0.5 L21 4 L21 22 L14 27 L14 6Z" fill="#fde9a4"/><path d="M14 6 L21 4 L21 22 L14 27Z" fill="#f8dc7e"/></svg>
<span style="left:1015px;top:99.84px;font-size:12px;line-height:16px;color:#1e1e1e;letter-spacing:-0.353px;">Новая</span>
<span style="left:1015px;top:112.84px;font-size:12px;line-height:16px;color:#1e1e1e;letter-spacing:0.028px;">папка</span>
<svg style="left:1055px;top:66px;" width="16" height="17" viewBox="0 0 16 17"><rect x="0.5" y="0.5" width="9" height="9" fill="#cfe3f7" stroke="#5e7fa8"/><rect x="2.5" y="2.5" width="4" height="3" fill="#2f86dd"/><path d="M6.5 5.5 H12 L15.5 8.5 V16.5 H6.5Z" fill="#fff" stroke="#7d8794"/><path d="M8.5 10.5 H13.5 M8.5 12.5 H13.5 M8.5 14.5 H13.5" stroke="#c98a3a" stroke-width=".8"/></svg>
<svg style="left:1074px;top:73px;" width="7" height="4" viewBox="0 0 7 4"><path d="M0.500 0 H6.500 L3.500 3.500Z" fill="#222"/></svg>
<svg style="left:1056px;top:88px;" width="15" height="16" viewBox="0 0 15 16"><path d="M4.5 0.5 H10.5 L14.5 4 V15.5 H4.5Z" fill="#fff" stroke="#7d8794"/><path d="M0 3.5 H8 M0 6.5 H6 M2 1 V9" stroke="#2a5db0" stroke-width="1.1"/></svg>
<svg style="left:1074px;top:94px;" width="7" height="4" viewBox="0 0 7 4"><path d="M0.500 0 H6.500 L3.500 3.500Z" fill="#222"/></svg>
<span style="left:1026px;top:132.84px;font-size:12px;line-height:16px;color:#4a4a4a;letter-spacing:-0.516px;">Создать</span>
<div style="left:1089px;top:62px;width:1px;height:86px;background:#e2e3e4;"></div>
<svg style="left:1109px;top:68px;" width="23" height="29" viewBox="0 0 23 29"><path d="M0.5 0.5 H16 L22.5 7 V28.5 H0.5Z" fill="#fff" stroke="#8a8a8a"/><path d="M16 0.5 V7 H22.5" fill="none" stroke="#8a8a8a"/><path d="M4.5 15 L9 20.5 L18.5 9.5" fill="none" stroke="#e8642c" stroke-width="2.6"/></svg>
<span style="left:1096px;top:99.84px;font-size:12px;line-height:16px;color:#1e1e1e;letter-spacing:-0.463px;">Свойства</span>
<svg style="left:1117px;top:119px;" width="7" height="4" viewBox="0 0 7 4"><path d="M0.500 0 H6.500 L3.500 3.500Z" fill="#222"/></svg>
<svg style="left:1151px;top:69px;" width="17" height="12" viewBox="0 0 17 12"><rect x="0.5" y="0.5" width="16" height="11" fill="#fff" stroke="#6d7785"/><rect x="0.5" y="0.5" width="16" height="2.5" fill="#6d7785"/><rect x="2.5" y="5" width="5" height="5" fill="#2f86dd"/><path d="M9.5 5.5 H14.5 M9.5 7.5 H14.5 M9.5 9.5 H14.5" stroke="#6d7785" stroke-width=".8"/></svg>
<svg style="left:1171px;top:73px;" width="7" height="4" viewBox="0 0 7 4"><path d="M0.500 0 H6.500 L3.500 3.500Z" fill="#222"/></svg>
<svg style="left:1153px;top:88px;" width="15" height="17" viewBox="0 0 15 17"><path d="M0.5 0.5 H9 L12.5 4 V16.5 H0.5Z" fill="#f3f6fa" stroke="#c0c9d6"/><path d="M5 12 L13 3 L14.5 4.5 L6.5 13.5 L4 14.5Z" fill="#c5cedb"/></svg>
<svg style="left:1151px;top:109px;" width="18" height="18" viewBox="0 0 18 18"><path d="M0.5 0.5 H8 L10.5 3 V13.5 H0.5Z" fill="#dfe5ee" stroke="#c0c9d6"/><circle cx="11.5" cy="11.5" r="5.8" fill="#e6ebf2" stroke="#b2bccb" stroke-width="1.3"/><path d="M11.5 8 V11.5 L8.8 13" stroke="#a3aec0" stroke-width="1.2" fill="none"/></svg>
<span style="left:1114px;top:132.84px;font-size:12px;line-height:16px;color:#4a4a4a;letter-spacing:-0.163px;">Открыть</span>
<div style="left:1185px;top:62px;width:1px;height:86px;background:#e2e3e4;"></div>
<div style="left:1189px;top:62px;width:56px;height:86px;background:#e8f1fb;border:1px solid #d3e4f6;"></div>
<div style="left:1202px;top:66px;width:30px;height:30px;background:#e8f1fb;border:1px solid #b5d2f0;"></div>
<svg style="left:1209px;top:73px;" width="17" height="17" viewBox="0 0 17 17"><g fill="#8fcdf6" stroke="#2f95e0"><rect x="0.5" y="0.5" width="7" height="7"/><rect x="9.5" y="0.5" width="7" height="7"/><rect x="0.5" y="9.5" width="7" height="7"/><rect x="9.5" y="9.5" width="7" height="7"/></g></svg>
<span style="left:1191px;top:99.84px;font-size:12px;line-height:16px;color:#1e1e1e;letter-spacing:-0.545px;">Выделить</span>
<svg style="left:1213px;top:119px;" width="7" height="4" viewBox="0 0 7 4"><path d="M0.500 0 H6.500 L3.500 3.500Z" fill="#222"/></svg>
<svg style="left:502px;top:163px;" width="13" height="10" viewBox="0 0 13 10"><path d="M12.5 5 H1.5 M5.5 0.8 L1.2 5 L5.5 9.2" stroke="#d0d0d0" stroke-width="1.4" fill="none"/></svg>
<svg style="left:531px;top:163px;" width="13" height="10" viewBox="0 0 13 10"><path d="M0.5 5 H11.5 M7.5 0.8 L11.8 5 L7.5 9.2" stroke="#d0d0d0" stroke-width="1.4" fill="none"/></svg>
<svg style="left:557px;top:166px;" width="7" height="4" viewBox="0 0 7 4"><path d="M0.5 0.5 L3.5 3.5 L6.5 0.5" stroke="#c4c4c4" stroke-width="1" fill="none"/></svg>
<svg style="left:575px;top:161px;" width="13" height="14" viewBox="0 0 13 14"><path d="M6.5 13.5 V1.5 M1.5 6.5 L6.5 1.2 L11.5 6.5" stroke="#6a6a6a" stroke-width="1.5" fill="none"/></svg>
<div style="left:595px;top:155px;width:453px;height:26px;background:#fff;border:1px solid #d9d9d9;"></div>
<svg style="left:600px;top:160px;" width="13" height="15" viewBox="0 0 13.5 16"><path d="M1 1 H9.5 L12.5 4 V15 H1Z" fill="#ffe9a2"/><path d="M1 1 H9.5 L12.5 4 V15 H1Z" fill="none" stroke="#f1d27c" stroke-width=".8"/><path d="M9.5 8 H12.5 V15 H9.5Z" fill="#f7d26a"/></svg>
<span style="left:619px;top:158.84px;font-size:12px;line-height:16px;color:#333;">«</span>
<span style="left:635px;top:158.84px;font-size:12px;line-height:16px;color:#1e1e1e;letter-spacing:-0.127px;">Programs</span>
<svg style="left:695px;top:164px;" width="5" height="8" viewBox="0 0 5 8"><path d="M0.8 0.8 L4 4 L0.8 7.2" stroke="#7a7a7a" stroke-width="1.2" fill="none"/></svg>
<span style="left:709px;top:158.84px;font-size:12px;line-height:16px;color:#1e1e1e;letter-spacing:0.025px;">Специальные возможности Windows</span>
<svg style="left:1017px;top:165px;" width="10" height="7" viewBox="0 0 10 7"><path d="M1 1 L5 5.5 L9 1" stroke="#555" stroke-width="1.6" fill="none"/></svg>
<div style="left:1030px;top:156px;width:1px;height:24px;background:#e1e1e1;"></div>
<svg style="left:1033px;top:161px;" width="12" height="14" viewBox="0 0 12 14"><path d="M10.2 7.5 A4.4 4.4 0 1 1 6 3" stroke="#6a6a6a" stroke-width="1.5" fill="none"/><path d="M5.5 0.3 L9 3 L5.5 5.8Z" fill="#6a6a6a"/></svg>
<div style="left:1059px;top:155px;width:202px;height:26px;background:#fff;border:1px solid #d9d9d9;"></div>
<span style="left:1068px;top:158.84px;font-size:12px;line-height:16px;color:#6d6d6d;letter-spacing:-0.099px;">Поиск в: Специальные возм...</span>
<svg style="left:1240px;top:161px;" width="13" height="13" viewBox="0 0 13 13"><circle cx="8" cy="5" r="3.8" fill="none" stroke="#555" stroke-width="1.5"/><path d="M5.3 7.7 L1 12" stroke="#555" stroke-width="1.8"/></svg>
<div style="left:490px;top:187px;width:782px;height:1px;background:#e8e8e8;"></div>
<div style="left:630px;top:188px;width:14px;height:449px;background:#f0f0f0;"></div>
<div style="left:630px;top:205px;width:14px;height:345px;background:#cdcdcd;"></div>
<svg style="left:633px;top:194px;" width="9" height="6" viewBox="0 0 9 6"><path d="M0.8 5.2 L4.5 1.2 L8.2 5.2" stroke="#555" stroke-width="1.5" fill="none"/></svg>
<svg style="left:515px;top:209.5px;" width="15" height="14" viewBox="0 0 15 14"><path d="M8.5 0.5 L10.5 5 L14.5 5.3 L11.5 8.5 L12.5 13 L8.5 10.7 L4.5 13 L5.5 8.5 L3 6 L0.5 8 L2 4.5 L6.5 5Z" fill="#3b98e6"/><path d="M0 7 H3 M0.5 10 H2.5" stroke="#6db5f0" stroke-width="1.2"/></svg>
<span style="left:534px;top:208.84px;font-size:12px;line-height:16px;color:#000;letter-spacing:-0.081px;">Быстрый доступ</span>
<svg style="left:521px;top:233.5px;" width="17" height="14" viewBox="0 0 17 14"><rect x="0.5" y="0.5" width="16" height="12" fill="#1e93ec" stroke="#1470c4"/><rect x="0.5" y="10" width="16" height="2.5" fill="#0f5fb0"/><path d="M3 11.2 H5 M6.5 11.2 H8.5" stroke="#9fd3ff" stroke-width="1"/></svg>
<span style="left:542.5px;top:232.84px;font-size:12px;line-height:16px;color:#000;letter-spacing:-0.245px;">Рабочий сто.</span>
<svg style="left:614px;top:235.5px;" width="11" height="11" viewBox="0 0 11 11"><path d="M6.5 0.5 L10.5 4.5 L9 5 L7 7 L7 9.5 L5.5 8.5 L2 5 L1.5 3.5 L4 4 L6 2Z" fill="#9aa5b5"/><path d="M4 7 L0.5 10.5" stroke="#9aa5b5" stroke-width="1.2"/></svg>
<svg style="left:521px;top:256.5px;" width="16" height="17" viewBox="0 0 16 17"><path d="M5 0.5 H11 V8 H15.5 L8 16.5 L0.5 8 H5Z" fill="#3d8fe2"/></svg>
<span style="left:542.5px;top:256.84px;font-size:12px;line-height:16px;color:#000;letter-spacing:-0.042px;">Downloads</span>
<svg style="left:614px;top:259.5px;" width="11" height="11" viewBox="0 0 11 11"><path d="M6.5 0.5 L10.5 4.5 L9 5 L7 7 L7 9.5 L5.5 8.5 L2 5 L1.5 3.5 L4 4 L6 2Z" fill="#9aa5b5"/><path d="M4 7 L0.5 10.5" stroke="#9aa5b5" stroke-width="1.2"/></svg>
<svg style="left:522px;top:280.5px;" width="13" height="16" viewBox="0 0 13 16"><path d="M0.5 0.5 H9 L12.5 4 V15.5 H0.5Z" fill="#fff" stroke="#8a97a6"/><path d="M2.5 3.5 H6 M2.5 5.5 H10 M2.5 7.5 H10 M2.5 9.5 H10 M2.5 11.5 H10 M2.5 13.5 H10" stroke="#3f7fc8" stroke-width=".9"/></svg>
<span style="left:542.5px;top:280.84px;font-size:12px;line-height:16px;color:#000;letter-spacing:0.127px;">Документы</span>
<svg style="left:614px;top:283.5px;" width="11" height="11" viewBox="0 0 11 11"><path d="M6.5 0.5 L10.5 4.5 L9 5 L7 7 L7 9.5 L5.5 8.5 L2 5 L1.5 3.5 L4 4 L6 2Z" fill="#9aa5b5"/><path d="M4 7 L0.5 10.5" stroke="#9aa5b5" stroke-width="1.2"/></svg>
<svg style="left:521px;top:306.5px;" width="17" height="13" viewBox="0 0 17 13"><rect x="0.5" y="0.5" width="16" height="12" fill="#fff" stroke="#9aa5b0"/><rect x="2.5" y="2.5" width="12" height="8" fill="#8fc3ea"/><path d="M2.5 10.5 L7 6 L10 8.5 L14.5 7 V10.5Z" fill="#3f7f5a"/></svg>
<span style="left:542.5px;top:304.84px;font-size:12px;line-height:16px;color:#000;letter-spacing:0.008px;">Изображени</span>
<svg style="left:614px;top:307.5px;" width="11" height="11" viewBox="0 0 11 11"><path d="M6.5 0.5 L10.5 4.5 L9 5 L7 7 L7 9.5 L5.5 8.5 L2 5 L1.5 3.5 L4 4 L6 2Z" fill="#9aa5b5"/><path d="M4 7 L0.5 10.5" stroke="#9aa5b5" stroke-width="1.2"/></svg>
<svg style="left:512px;top:337.5px;" width="18" height="15" viewBox="0 0 18 15"><rect x="1.5" y="0.5" width="15" height="10" fill="#3aa0ee" stroke="#1f74c8"/><rect x="2.5" y="1.5" width="13" height="3" fill="#7fc4f7"/><rect x="7" y="11" width="4" height="1.8" fill="#8d99a8"/><rect x="3.5" y="12.8" width="11" height="1.6" fill="#b5bec9"/></svg>
<span style="left:534px;top:336.84px;font-size:12px;line-height:16px;color:#000;letter-spacing:0.019px;">Этот компьютер</span>
<svg style="left:521px;top:360.5px;" width="16" height="17" viewBox="0 0 16 17"><path d="M5 0.5 H11 V8 H15.5 L8 16.5 L0.5 8 H5Z" fill="#3d8fe2"/></svg>
<span style="left:542.5px;top:360.84px;font-size:12px;line-height:16px;color:#000;letter-spacing:-0.042px;">Downloads</span>
<svg style="left:522px;top:384.5px;" width="14" height="16" viewBox="0 0 14 16"><rect x="0.5" y="0.5" width="13" height="15" fill="#3a3a4a" stroke="#222"/><rect x="3" y="2" width="8" height="5.5" fill="#d9a84a"/><rect x="3" y="8.5" width="8" height="5.5" fill="#5a8fd0"/><path d="M1.7 2 V15 M12.3 2 V15" stroke="#ddd" stroke-width="1" stroke-dasharray="1.2 1.2"/></svg>
<span style="left:542.5px;top:384.84px;font-size:12px;line-height:16px;color:#000;letter-spacing:-0.412px;">Видео</span>
<svg style="left:522px;top:408.5px;" width="13" height="16" viewBox="0 0 13 16"><path d="M0.5 0.5 H9 L12.5 4 V15.5 H0.5Z" fill="#fff" stroke="#8a97a6"/><path d="M2.5 3.5 H6 M2.5 5.5 H10 M2.5 7.5 H10 M2.5 9.5 H10 M2.5 11.5 H10 M2.5 13.5 H10" stroke="#3f7fc8" stroke-width=".9"/></svg>
<span style="left:542.5px;top:408.84px;font-size:12px;line-height:16px;color:#000;letter-spacing:0.127px;">Документы</span>
<svg style="left:521px;top:434.5px;" width="17" height="13" viewBox="0 0 17 13"><rect x="0.5" y="0.5" width="16" height="12" fill="#fff" stroke="#9aa5b0"/><rect x="2.5" y="2.5" width="12" height="8" fill="#8fc3ea"/><path d="M2.5 10.5 L7 6 L10 8.5 L14.5 7 V10.5Z" fill="#3f7f5a"/></svg>
<span style="left:542.5px;top:432.84px;font-size:12px;line-height:16px;color:#000;letter-spacing:-0.038px;">Изображения</span>
<svg style="left:524px;top:456.5px;" width="11" height="17" viewBox="0 0 11 17"><path d="M4.5 0.5 C6 4 10.5 4.5 9 10 C9 6.5 6.5 6.5 6 6 V13 A3 2.8 0 1 1 4.5 10.3Z" fill="#1f8ee8"/></svg>
<span style="left:542.5px;top:456.84px;font-size:12px;line-height:16px;color:#000;letter-spacing:-0.076px;">Музыка</span>
<svg style="left:521px;top:480.5px;" width="17" height="17" viewBox="0 0 17 17"><path d="M8.5 0.5 L16.5 3.5 V12.5 L8.5 16.5 L0.5 12.5 V3.5Z" fill="#36b8d8"/><path d="M8.5 0.5 L16.5 3.5 L8.5 7 L0.5 3.5Z" fill="#8fe3f2"/><path d="M8.5 7 V16.5 L0.5 12.5 V3.5Z" fill="#1f93c2"/></svg>
<span style="left:542.5px;top:480.84px;font-size:12px;line-height:16px;color:#000;letter-spacing:0.155px;">Объемные объ</span>
<svg style="left:521px;top:505.5px;" width="17" height="14" viewBox="0 0 17 14"><rect x="0.5" y="0.5" width="16" height="12" fill="#1e93ec" stroke="#1470c4"/><rect x="0.5" y="10" width="16" height="2.5" fill="#0f5fb0"/><path d="M3 11.2 H5 M6.5 11.2 H8.5" stroke="#9fd3ff" stroke-width="1"/></svg>
<span style="left:542.5px;top:504.84px;font-size:12px;line-height:16px;color:#000;letter-spacing:0.056px;">Рабочий стол</span>
<div style="left:490px;top:525.0px;width:140px;height:23px;background:#d9d9d9;"></div>
<svg style="left:521px;top:529.5px;" width="17" height="14" viewBox="0 0 17 14"><rect x="2" y="9" width="14" height="4" rx="1" fill="#3a3a3a"/><rect x="3" y="10.2" width="6" height="1.2" fill="#999"/><g fill="#1fa7f0"><rect x="0" y="0" width="3.2" height="3.2"/><rect x="4.2" y="0" width="3.2" height="3.2"/><rect x="0" y="4.2" width="3.2" height="3.2"/><rect x="4.2" y="4.2" width="3.2" height="3.2"/></g></svg>
<span style="left:542.5px;top:528.84px;font-size:12px;line-height:16px;color:#000;letter-spacing:-0.333px;">C (C:)</span>
<span style="left:666px;top:193.84px;font-size:12px;line-height:16px;color:#4c607a;letter-spacing:-0.125px;">Имя</span>
<svg style="left:785px;top:189px;" width="10" height="5" viewBox="0 0 10 5"><path d="M0.5 4.5 L5 0.8 L9.5 4.5" stroke="#777" stroke-width="1" fill="none"/></svg>
<div style="left:920px;top:188px;width:1px;height:25px;background:#e5e5e5;"></div>
<div style="left:1040px;top:188px;width:1px;height:25px;background:#e5e5e5;"></div>
<div style="left:1160px;top:188px;width:1px;height:25px;background:#e5e5e5;"></div>
<div style="left:1240px;top:188px;width:1px;height:25px;background:#e5e5e5;"></div>
<span style="left:927px;top:193.84px;font-size:12px;line-height:16px;color:#4c607a;letter-spacing:-0.155px;">Дата изменения</span>
<span style="left:1047px;top:193.84px;font-size:12px;line-height:16px;color:#4c607a;letter-spacing:0.328px;">Тип</span>
<span style="left:1167px;top:193.84px;font-size:12px;line-height:16px;color:#4c607a;letter-spacing:-0.208px;">Размер</span>
<div style="left:663px;top:220px;width:574px;height:22px;background:#d9d9d9;"></div>
<span style="left:687px;top:222.84px;font-size:12px;line-height:16px;color:#000;letter-spacing:-0.178px;">Экранная клавиатура</span>
<span style="left:687px;top:244.34px;font-size:12px;line-height:16px;color:#000;">Экра</span>
<span style="left:687px;top:265.34px;font-size:12px;line-height:16px;color:#000;">Экра</span>
<span style="left:927px;top:222.84px;font-size:12px;line-height:16px;color:#6d6d6d;letter-spacing:-0.589px;">15.09.2018 10:28</span>
<span style="left:1047px;top:222.84px;font-size:12px;line-height:16px;color:#6d6d6d;letter-spacing:0.037px;">Ярлык</span>
<span style="left:1233px;top:222.84px;font-size:12px;line-height:16px;color:#6d6d6d;letter-spacing:-0.469px;left:1210px;">2 КБ</span>
<span style="left:927px;top:243.84px;font-size:12px;line-height:16px;color:#6d6d6d;letter-spacing:-0.589px;">15.09.2018 10:28</span>
<span style="left:1047px;top:243.84px;font-size:12px;line-height:16px;color:#6d6d6d;letter-spacing:0.037px;">Ярлык</span>
<span style="left:1233px;top:243.84px;font-size:12px;line-height:16px;color:#6d6d6d;letter-spacing:-0.469px;left:1210px;">2 КБ</span>
<span style="left:927px;top:264.84px;font-size:12px;line-height:16px;color:#6d6d6d;letter-spacing:-0.589px;">15.09.2018 10:28</span>
<span style="left:1047px;top:264.84px;font-size:12px;line-height:16px;color:#6d6d6d;letter-spacing:0.037px;">Ярлык</span>
<span style="left:1233px;top:264.84px;font-size:12px;line-height:16px;color:#6d6d6d;letter-spacing:-0.469px;left:1210px;">2 КБ</span>
<svg style="left:667px;top:225px;" width="17" height="16" viewBox="0 0 17 16"><rect x="2.500" y="1.500" width="14" height="7.500" rx=".6" fill="#3f90e6" stroke="#2566bd" stroke-width=".9"/><path d="M4 3.700 H15.500 M4 5.500 H15.500 M5.500 7.300 H14" stroke="#fff" stroke-width="1.100" stroke-dasharray="1.200 .9"/><rect x="0.5" y="7.5" width="8" height="8" fill="#fff" stroke="#9aa6b4"/><path d="M2 14 C2 11.5 3.8 11 5 11 L5 9.4 L7.4 11.8 L5 14.2 L5 12.8 C3.8 12.8 2.8 13.2 2 14Z" fill="#1b4fb0"/></svg>
<svg style="left:667px;top:243px;" width="18" height="18" viewBox="0 0 18 18"><rect x="3.500" y="1" width="13.500" height="10" fill="#36a3f2"/><rect x="3.500" y="1" width="13.500" height="3" fill="#6cc0f8"/><path d="M9 11 L13 11 L14 13.500 L8 13.500Z" fill="#aeb9c5"/><circle cx="7" cy="11" r="3" fill="#e8f2fb" stroke="#7f8c9b" stroke-width="1"/><path d="M9.200 13.200 L11.500 16" stroke="#7f8c9b" stroke-width="1.600"/><rect x="0.5" y="9.5" width="8" height="8" fill="#fff" stroke="#9aa6b4"/><path d="M2 16 C2 13.5 3.8 13 5 13 L5 11.4 L7.4 13.8 L5 16.2 L5 14.8 C3.8 14.8 2.8 15.2 2 16Z" fill="#1b4fb0"/></svg>
<svg style="left:667px;top:264px;" width="18" height="18" viewBox="0 0 18 18"><ellipse cx="6.500" cy="4.500" rx="5.500" ry="3.600" fill="#f8e3a0" stroke="#d1a83f" stroke-width=".8"/><path d="M4 7.500 L3 10 L6.500 8Z" fill="#f8e3a0" stroke="#d1a83f" stroke-width=".6"/><rect x="8.500" y="6.500" width="8" height="7" fill="#3a6fd6" stroke="#9fb3d6" stroke-width=".9"/><rect x="9.500" y="7.500" width="6" height="2.500" fill="#7fa8ef"/><rect x="10.500" y="14" width="4.500" height="1.800" fill="#9aa6b4"/><rect x="0.5" y="9.5" width="8" height="8" fill="#fff" stroke="#9aa6b4"/><path d="M2 16 C2 13.5 3.8 13 5 13 L5 11.4 L7.4 13.8 L5 16.2 L5 14.8 C3.8 14.8 2.8 15.2 2 16Z" fill="#1b4fb0"/></svg>
<div style="left:1225px;top:614px;width:23px;height:23px;background:#cce8ff;border:1px solid #4ba3e3;"></div>
<svg style="left:1229px;top:619px;" width="16" height="13" viewBox="0 0 16 13"><g fill="#fff" stroke="#8a6a5a" stroke-width=".8"><rect x="0.5" y="0.5" width="3" height="3"/><rect x="0.5" y="5" width="3" height="3"/><rect x="0.5" y="9.5" width="3" height="3"/></g><path d="M6 2 H9 M11 2 H15 M6 6.5 H9 M11 6.5 H15 M6 11 H9 M11 11 H15" stroke="#5a6a7a" stroke-width="1.2"/></svg>
<svg style="left:1251px;top:619px;" width="14" height="11" viewBox="0 0 14 11"><rect x="0.5" y="0.5" width="13" height="10" fill="#fff" stroke="#8a8a8a"/><rect x="2" y="2" width="10" height="7" fill="#4a8fc8"/><path d="M2 9 L6 5 L9 7.5 L12 6 V9Z" fill="#2a6a4a"/></svg>
<div style="left:711px;top:250px;width:378px;height:508px;background:#f0f0f0;border:1px solid #8c8c8c;box-shadow:0 2px 14px rgba(0,0,0,.45);"></div>
<div style="left:712px;top:251px;width:376px;height:30px;background:#fff;"></div>
<svg style="left:720px;top:255px;" width="17" height="17" viewBox="0 0 32 32"><defs><linearGradient id="oskga" x1="0" y1="0" x2="1" y2="1"><stop offset="0" stop-color="#1226c4"/><stop offset="0.55" stop-color="#2f6fe0"/><stop offset="1" stop-color="#6fb8f4"/></linearGradient></defs>
<ellipse cx="19" cy="29.800" rx="9" ry="1.800" fill="#b4bec9"/>
<path d="M14 22.500 L24 23.500 L25.500 29.500 L12.500 28.500Z" fill="#d3dae2"/>
<path d="M6 0.800 L31 4 L30 24.500 L8 22.200Z" fill="#dbe3ec" stroke="#a9b5c3" stroke-width=".7"/>
<path d="M7.600 2.600 L29.300 5.400 L28.400 22.600 L9.400 20.600Z" fill="url(#oskga)"/>
<rect x="1" y="8.500" width="22.500" height="10" rx=".8" fill="#63b2f5" stroke="#2a72d0" stroke-width=".9"/>
<path d="M3 11 H22 M3 13.500 H22 M5 16 H20" stroke="#fff" stroke-width="1.300" stroke-dasharray="1.400 1"/></svg>
<svg style="left:720px;top:265px;" width="8" height="8" viewBox="0 0 8 8"><rect x="0.5" y="0.5" width="7" height="7" fill="#fff" stroke="#9aa6b4"/><path d="M2 6 C2 4.5 3.8 4 5 4 L5 2.4 L6.2 4.8 L5 7.2 L5 5.8 C3.8 5.8 2.8 6.2 2 6Z" fill="#1f5fc4"/></svg>
<span style="left:741px;top:257.04px;font-size:12px;line-height:16px;color:#999;letter-spacing:-0.198px;">Свойства: Экранная клавиатура</span>
<svg style="left:1068.5px;top:259.0px;" width="11" height="11" viewBox="0 0 11 11"><path d="M0.5 0.5 L10.5 10.5 M10.5 0.5 L0.5 10.5" stroke="#8a8a8a" stroke-width="1"/></svg>
<div style="left:718px;top:307px;width:362px;height:413px;background:#fff;border:1px solid #dcdcdc;"></div>
<div style="left:719px;top:287px;width:50px;height:21px;background:#fff;border:1px solid #dcdcdc;border-bottom:none;"></div>
<span style="left:744.0px;top:289.19px;font-size:11px;line-height:14px;color:#000;letter-spacing:-0.234px;left:726.5px;">Общие</span>
<div style="left:768px;top:289px;width:45px;height:18px;background:#f0f0f0;border:1px solid #dcdcdc;border-bottom:none;"></div>
<span style="left:790.5px;top:291.69px;font-size:11px;line-height:14px;color:#000;letter-spacing:0.034px;left:774.0px;">Ярлык</span>
<div style="left:812px;top:289px;width:85px;height:18px;background:#f0f0f0;border:1px solid #dcdcdc;border-bottom:none;"></div>
<span style="left:854.5px;top:291.69px;font-size:11px;line-height:14px;color:#000;letter-spacing:0.069px;left:819.0px;">Безопасность</span>
<div style="left:896px;top:289px;width:63px;height:18px;background:#f0f0f0;border:1px solid #dcdcdc;border-bottom:none;"></div>
<span style="left:927.5px;top:291.69px;font-size:11px;line-height:14px;color:#000;letter-spacing:-0.242px;left:903.0px;">Подробно</span>
<div style="left:958px;top:289px;width:116px;height:18px;background:#f0f0f0;border:1px solid #dcdcdc;border-bottom:none;"></div>
<span style="left:1016.0px;top:291.69px;font-size:11px;line-height:14px;color:#000;letter-spacing:-0.133px;left:964.0px;">Предыдущие версии</span>
<svg style="left:732px;top:319px;" width="33" height="33" viewBox="0 0 32 32"><defs><linearGradient id="oskgb" x1="0" y1="0" x2="1" y2="1"><stop offset="0" stop-color="#1226c4"/><stop offset="0.55" stop-color="#2f6fe0"/><stop offset="1" stop-color="#6fb8f4"/></linearGradient></defs>
<ellipse cx="19" cy="29.800" rx="9" ry="1.800" fill="#b4bec9"/>
<path d="M14 22.500 L24 23.500 L25.500 29.500 L12.500 28.500Z" fill="#d3dae2"/>
<path d="M6 0.800 L31 4 L30 24.500 L8 22.200Z" fill="#dbe3ec" stroke="#a9b5c3" stroke-width=".7"/>
<path d="M7.600 2.600 L29.300 5.400 L28.400 22.600 L9.400 20.600Z" fill="url(#oskgb)"/>
<rect x="1" y="8.500" width="22.500" height="10" rx=".8" fill="#63b2f5" stroke="#2a72d0" stroke-width=".9"/>
<path d="M3 11 H22 M3 13.500 H22 M5 16 H20" stroke="#fff" stroke-width="1.300" stroke-dasharray="1.400 1"/></svg>
<svg style="left:733px;top:340px;" width="11" height="11" viewBox="0 0 11 11"><rect x="0.5" y="0.5" width="10" height="10" fill="#fff" stroke="#9aa6b4"/><path d="M2 9 C2 4.5 3.8 4 5 4 L5 2.4 L9.2 4.8 L5 7.2 L5 5.8 C3.8 5.8 2.8 6.2 2 9Z" fill="#1f5fc4"/></svg>
<div style="left:821px;top:327px;width:246px;height:23px;background:#fff;border:1px solid #7a7a7a;"></div>
<span style="left:824px;top:330.19px;font-size:11px;line-height:14px;color:#000;letter-spacing:-0.018px;">Экранная клавиатура</span>
<div style="left:731px;top:361px;width:336px;height:1px;background:#a0a0a0;"></div>
<div style="left:731px;top:433px;width:336px;height:1px;background:#a0a0a0;"></div>
<div style="left:731px;top:524px;width:336px;height:1px;background:#a0a0a0;"></div>
<div style="left:731px;top:615px;width:336px;height:1px;background:#a0a0a0;"></div>
<span style="left:733px;top:374.19px;font-size:11px;line-height:14px;color:#000;letter-spacing:-0.131px;">Тип файла:</span>
<span style="left:818px;top:374.19px;font-size:11px;line-height:14px;color:#000;letter-spacing:-0.027px;">Ярлык (.lnk)</span>
<span style="left:733px;top:400.19px;font-size:11px;line-height:14px;color:#000;letter-spacing:-0.075px;">Описание:</span>
<span style="left:805.5px;top:400.19px;font-size:11px;line-height:14px;color:#000;letter-spacing:-0.032px;">Специальная экранная клавиатура</span>
<span style="left:733px;top:446.19px;font-size:11px;line-height:14px;color:#000;letter-spacing:0.013px;">Расположение:</span>
<span style="left:733px;top:472.19px;font-size:11px;line-height:14px;color:#000;letter-spacing:0.161px;">Размер:</span>
<span style="left:818px;top:472.19px;font-size:11px;line-height:14px;color:#000;letter-spacing:-0.120px;">1,08 КБ (1 106 байт)</span>
<span style="left:733px;top:498.19px;font-size:11px;line-height:14px;color:#000;letter-spacing:-0.033px;">На диске:</span>
<span style="left:818px;top:498.19px;font-size:11px;line-height:14px;color:#000;letter-spacing:-0.120px;">4,00 КБ (4 096 байт)</span>
<span style="left:733px;top:536.19px;font-size:11px;line-height:14px;color:#000;letter-spacing:-0.060px;">Создан:</span>
<span style="left:818px;top:536.19px;font-size:11px;line-height:14px;color:#000;letter-spacing:-0.032px;">14 ноября 2022 г., 6:32:31</span>
<span style="left:733px;top:562.19px;font-size:11px;line-height:14px;color:#000;letter-spacing:0.131px;">Изменен:</span>
<span style="left:818px;top:562.19px;font-size:11px;line-height:14px;color:#000;letter-spacing:0.018px;">15 сентября 2018 г., 10:28:43</span>
<span style="left:733px;top:588.19px;font-size:11px;line-height:14px;color:#000;letter-spacing:0.067px;">Открыт:</span>
<span style="left:818px;top:588.19px;font-size:11px;line-height:14px;color:#000;letter-spacing:-0.018px;">18 декабря 2022 г., 18:24:21</span>
<span style="left:733px;top:628.19px;font-size:11px;line-height:14px;color:#000;letter-spacing:-0.219px;">Атрибуты:</span>
<div style="left:817px;top:446px;width:250px;height:16px;overflow:hidden;"><span style="left:0;top:0;font-size:11px;line-height:14px;letter-spacing:-0.05px;">C:\Users\Professional\AppData\Roaming\Microsoft\Windows</span></div>
<div style="left:788px;top:629px;width:13px;height:13px;background:#fff;border:1px solid #333;"></div>
<span style="left:804.5px;top:628.19px;font-size:11px;line-height:14px;color:#000;letter-spacing:-0.008px;">Только чтение</span>
<div style="left:895px;top:629px;width:13px;height:13px;background:#fff;border:1px solid #333;"></div>
<span style="left:911px;top:628.19px;font-size:11px;line-height:14px;color:#000;letter-spacing:0.018px;">Скрытый</span>
<div style="left:977px;top:625px;width:94px;height:21px;background:#e1e1e1;border:1px solid #adadad;"></div>
<span style="left:1024.0px;top:628.69px;font-size:11px;line-height:14px;color:#000;letter-spacing:0.179px;left:1001.0px;">Другие...</span>
<div style="left:846px;top:728px;width:73px;height:21px;background:#e1e1e1;border:1px solid #adadad;"></div>
<span style="left:882.5px;top:731.69px;font-size:11px;line-height:14px;color:#000;letter-spacing:-0.453px;left:875.0px;">OK</span>
<div style="left:927px;top:728px;width:73px;height:21px;background:#e1e1e1;border:1px solid #adadad;"></div>
<span style="left:963.5px;top:731.69px;font-size:11px;line-height:14px;color:#000;letter-spacing:0.089px;left:943.5px;">Отмена</span>
<div style="left:1008px;top:728px;width:73px;height:21px;background:#cccccc;border:1px solid #bfbfbf;"></div>
<span style="left:1044.5px;top:731.69px;font-size:11px;line-height:14px;color:#838383;letter-spacing:0.017px;left:1016.0px;">Применить</span>
<div style="left:86px;top:460px;width:377px;height:503px;background:#f0f0f0;border:1px solid #8c8c8c;box-shadow:0 2px 14px rgba(0,0,0,.45);"></div>
<div style="left:87px;top:461px;width:375px;height:26px;background:#fff;"></div>
<svg style="left:93px;top:466px;" width="12" height="16" viewBox="0 0 12 16"><path d="M0.5 0.5 H8 L11.5 4 V15.5 H0.5Z" fill="#fff" stroke="#c9c9c9"/></svg>
<svg style="left:91px;top:475px;" width="7" height="7" viewBox="0 0 7 7"><rect x="0.5" y="0.5" width="6" height="6" fill="#fff" stroke="#9aa6b4"/><path d="M2 5 C2 4.5 3.8 4 5 4 L5 2.4 L5.2 4.8 L5 7.2 L5 5.8 C3.8 5.8 2.8 6.2 2 5Z" fill="#1f5fc4"/></svg>
<span style="left:112px;top:465.04px;font-size:12px;line-height:16px;color:#999;letter-spacing:-0.198px;">Свойства: Экранная клавиатура</span>
<svg style="left:442.5px;top:467.0px;" width="11" height="11" viewBox="0 0 11 11"><path d="M0.5 0.5 L10.5 10.5 M10.5 0.5 L0.5 10.5" stroke="#8a8a8a" stroke-width="1"/></svg>
<div style="left:93px;top:513px;width:361px;height:413px;background:#fff;border:1px solid #dcdcdc;"></div>
<div style="left:95px;top:495px;width:46px;height:18px;background:#f0f0f0;border:1px solid #dcdcdc;border-bottom:none;"></div>
<span style="left:118.0px;top:497.69px;font-size:11px;line-height:14px;color:#000;letter-spacing:-0.234px;left:100.5px;">Общие</span>
<div style="left:140px;top:493px;width:50px;height:21px;background:#fff;border:1px solid #dcdcdc;border-bottom:none;"></div>
<span style="left:165.0px;top:495.19px;font-size:11px;line-height:14px;color:#000;letter-spacing:0.034px;left:148.5px;">Ярлык</span>
<div style="left:189px;top:495px;width:83px;height:18px;background:#f0f0f0;border:1px solid #dcdcdc;border-bottom:none;"></div>
<span style="left:230.5px;top:497.69px;font-size:11px;line-height:14px;color:#000;letter-spacing:0.069px;left:195.0px;">Безопасность</span>
<div style="left:271px;top:495px;width:63px;height:18px;background:#f0f0f0;border:1px solid #dcdcdc;border-bottom:none;"></div>
<span style="left:302.5px;top:497.69px;font-size:11px;line-height:14px;color:#000;letter-spacing:-0.242px;left:278.0px;">Подробно</span>
<div style="left:333px;top:495px;width:115px;height:18px;background:#f0f0f0;border:1px solid #dcdcdc;border-bottom:none;"></div>
<span style="left:390.5px;top:497.69px;font-size:11px;line-height:14px;color:#000;letter-spacing:-0.133px;left:338.5px;">Предыдущие версии</span>
<svg style="left:110px;top:528px;" width="25" height="30" viewBox="0 0 25 30"><path d="M4.5 0.5 H18 L24.5 7 V29.5 H4.5Z" fill="#fff" stroke="#cfcfcf"/><path d="M18 0.5 V7 H24.5" fill="none" stroke="#cfcfcf"/></svg>
<svg style="left:108px;top:546px;" width="12" height="12" viewBox="0 0 12 12"><rect x="0.5" y="0.5" width="11" height="11" fill="#fff" stroke="#9aa6b4"/><path d="M2 10 C2 4.5 3.8 4 5 4 L5 2.4 L10.2 4.8 L5 7.2 L5 5.8 C3.8 5.8 2.8 6.2 2 10Z" fill="#1f5fc4"/></svg>
<span style="left:170.5px;top:535.19px;font-size:11px;line-height:14px;color:#000;letter-spacing:-0.018px;">Экранная клавиатура</span>
<div style="left:108px;top:565px;width:334px;height:1px;background:#a0a0a0;"></div>
<div style="left:108px;top:658px;width:334px;height:1px;background:#a0a0a0;"></div>
<span style="left:108px;top:578.19px;font-size:11px;line-height:14px;color:#000;letter-spacing:0.044px;">Тип объекта:</span>
<span style="left:108px;top:604.19px;font-size:11px;line-height:14px;color:#000;letter-spacing:0.013px;">Расположение:</span>
<span style="left:108px;top:630.19px;font-size:11px;line-height:14px;color:#000;letter-spacing:0.069px;">Объект:</span>
<span style="left:108px;top:674.19px;font-size:11px;line-height:14px;color:#000;letter-spacing:-0.028px;">Рабочая папка:</span>
<div style="left:199px;top:672px;width:243px;height:22px;background:#fff;border:1px solid #7a7a7a;"></div>
<span style="left:109px;top:705.19px;font-size:11px;line-height:14px;color:#000;letter-spacing:0.102px;">Быстрый вызов:</span>
<div style="left:199px;top:702px;width:243px;height:23px;background:#fff;border:1px solid #7a7a7a;"></div>
<span style="left:202px;top:705.19px;font-size:11px;line-height:14px;color:#000;letter-spacing:0.089px;">Нет</span>
<span style="left:108px;top:736.19px;font-size:11px;line-height:14px;color:#000;letter-spacing:0.075px;">Окно:</span>
<div style="left:199px;top:733px;width:243px;height:21px;background:#e1e1e1;border:1px solid #adadad;"></div>
<span style="left:202px;top:737.19px;font-size:11px;line-height:14px;color:#000;letter-spacing:0.010px;">Обычный размер окна</span>
<svg style="left:428px;top:741px;" width="9" height="6" viewBox="0 0 9 6"><path d="M0.500 0.800 L4.500 4.800 L8.500 0.800" stroke="#555" stroke-width="1" fill="none"/></svg>
<span style="left:108px;top:765.19px;font-size:11px;line-height:14px;color:#000;letter-spacing:0.055px;">Комментарий:</span>
<div style="left:199px;top:762px;width:243px;height:23px;background:#fff;border:1px solid #7a7a7a;"></div>
<span style="left:202px;top:765.19px;font-size:11px;line-height:14px;color:#000;letter-spacing:-0.002px;">Выводит на экран изображение клавиатуры, п</span>
<div style="left:106px;top:792px;width:126px;height:21px;background:#e1e1e1;border:1px solid #adadad;"></div>
<span style="left:169.0px;top:795.69px;font-size:11px;line-height:14px;color:#000;letter-spacing:-0.149px;left:114.5px;">Расположение файла</span>
<div style="left:238px;top:792px;width:96px;height:21px;background:#e1e1e1;border:1px solid #adadad;"></div>
<span style="left:286.0px;top:795.69px;font-size:11px;line-height:14px;color:#000;letter-spacing:0.029px;left:240.5px;">Сменить значок...</span>
<div style="left:341px;top:792px;width:99px;height:21px;background:#e1e1e1;border:1px solid #adadad;"></div>
<span style="left:390.5px;top:795.69px;font-size:11px;line-height:14px;color:#000;letter-spacing:0.041px;left:346.0px;">Дополнительно...</span>
<div style="left:221px;top:934px;width:73px;height:21px;background:#e1e1e1;border:1px solid #adadad;"></div>
<span style="left:257.5px;top:937.69px;font-size:11px;line-height:14px;color:#000;letter-spacing:-0.453px;left:250.0px;">OK</span>
<div style="left:302px;top:934px;width:73px;height:21px;background:#e1e1e1;border:1px solid #adadad;"></div>
<span style="left:338.5px;top:937.69px;font-size:11px;line-height:14px;color:#000;letter-spacing:0.089px;left:318.5px;">Отмена</span>
<div style="left:383px;top:934px;width:73px;height:21px;background:#cccccc;border:1px solid #bfbfbf;"></div>
<span style="left:419.5px;top:937.69px;font-size:11px;line-height:14px;color:#838383;letter-spacing:0.017px;left:391.0px;">Применить</span>
<div style="left:150px;top:548px;width:558px;height:127px;background:#fff;border:1px solid #6e6e6e;box-shadow:0 3px 16px rgba(0,0,0,.5);"></div>
<div style="left:151px;top:635px;width:556px;height:39px;background:#f0f0f0;"></div>
<span style="left:154px;top:552.84px;font-size:12px;line-height:16px;color:#000;letter-spacing:0.100px;">Ошибка при работе с ярлыком</span>
<svg style="left:686.0px;top:555.0px;" width="12" height="12" viewBox="0 0 12 12"><path d="M0.5 0.5 L11.5 11.5 M11.5 0.5 L0.5 11.5" stroke="#111" stroke-width="1.2"/></svg>
<svg style="left:160px;top:584px;" width="34" height="32" viewBox="0 0 34 32"><path d="M17 1.5 L32.5 30.5 H1.5Z" fill="#ffd21e" stroke="#e8b800" stroke-width="1.2" stroke-linejoin="round"/><path d="M17 3.5 L24 17 L10 17Z" fill="#ffe566" opacity=".7"/><path d="M17 11.5 V22" stroke="#000" stroke-width="2.4"/><rect x="15.8" y="24" width="2.4" height="2.6" fill="#000"/></svg>
<span style="left:203px;top:588.84px;font-size:12px;line-height:16px;color:#000;letter-spacing:-0.031px;">Имя конечного файла &quot;%windir%\system32\osk.exe&quot; задано неправильно. Проверьте</span>
<span style="left:203px;top:603.84px;font-size:12px;line-height:16px;color:#000;letter-spacing:-0.057px;">правильность указанного пути и имени файла.</span>
<div style="left:630px;top:644px;width:67px;height:21px;background:#e1e1e1;border:2px solid #0078d7;"></div>
<span style="left:663.5px;top:647.69px;font-size:11px;line-height:14px;color:#000;letter-spacing:0.047px;left:655.5px;">OK</span>
<div style="left:0px;top:984px;width:1280px;height:40px;background:#0d0d0d;"></div>
<svg style="left:15px;top:996px;" width="18" height="17" viewBox="0 0 18 17"><g fill="#fff"><path d="M0 2.3 L7.5 1.2 V8 H0Z"/><path d="M8.5 1.1 L18 0 V8 H8.5Z"/><path d="M0 9 H7.5 V15.8 L0 14.7Z"/><path d="M8.5 9 H18 V17 L8.5 15.9Z"/></g></svg>
<div style="left:51px;top:991px;width:16px;height:16px;background:#d98a18;"></div>
<span style="left:59px;top:991.84px;font-size:12px;line-height:16px;color:#1a1a1a;left:54.6640625px;-webkit-text-stroke:0.3px #1a1a1a;">C</span>
<div style="left:74px;top:991px;width:16px;height:16px;background:#18d8e8;"></div>
<span style="left:82px;top:991.84px;font-size:12px;line-height:16px;color:#1a1a1a;left:77.6640625px;-webkit-text-stroke:0.3px #1a1a1a;">D</span>
<div style="left:97px;top:991px;width:16px;height:16px;background:#1fe0a0;"></div>
<span style="left:105px;top:991.84px;font-size:12px;line-height:16px;color:#1a1a1a;left:100.9921875px;-webkit-text-stroke:0.3px #1a1a1a;">E</span>
<svg style="left:122px;top:992px;" width="13" height="15" viewBox="0 0 13 15"><path d="M0.5 0.5 H9 L12.5 4 V14.5 H0.5Z" fill="#f0f0f0" stroke="#bdbdbd"/><path d="M2.5 4.5 H10 M2.5 6.5 H10 M2.5 8.5 H10 M2.5 10.5 H10 M2.5 12.5 H10" stroke="#555" stroke-width=".9"/></svg>
<svg style="left:156px;top:990px;" width="9" height="7" viewBox="0 0 9 7"><path d="M0.8 0.8 L3.8 3.5 L0.8 6.2 M4.8 0.8 L7.8 3.5 L4.8 6.2" stroke="#fff" stroke-width="1.2" fill="none"/></svg>
<div style="left:178px;top:1022px;width:130px;height:2px;background:#7f9fe8;"></div>
<svg style="left:184px;top:992px;" width="22" height="23" viewBox="0 0 22 23"><defs><radialGradient id="tcg2" cx=".4" cy=".3" r=".75"><stop offset="0" stop-color="#c9e9fc"/><stop offset=".45" stop-color="#4aa0e0"/><stop offset="1" stop-color="#1a55b8"/></radialGradient></defs><ellipse cx="11" cy="20.800" rx="8" ry="1.800" fill="#3f6fb8" opacity=".7"/><circle cx="11" cy="10.500" r="10" fill="url(#tcg2)"/><text x="3.200" y="12.500" font-family="Liberation Sans, sans-serif" font-size="10" font-weight="700" font-style="italic" fill="#23902e">T</text><text x="9" y="16.500" font-family="Liberation Sans, sans-serif" font-size="12" font-weight="700" font-style="italic" fill="#23902e">c</text></svg>
<span style="left:212px;top:995.84px;font-size:12px;line-height:16px;color:#fff;letter-spacing:-0.025px;">Total Comman...</span>
<div style="left:311px;top:984px;width:136px;height:40px;background:#373737;"></div>
<div style="left:311px;top:1022px;width:136px;height:2px;background:#8fb0f2;"></div>
<svg style="left:324px;top:991px;" width="15" height="20" viewBox="0 0 15 20"><path d="M0.5 0.5 H10 L14.5 5 V19.5 H0.5Z" fill="#f4f4f4" stroke="#cfcfcf"/></svg>
<svg style="left:320px;top:1004px;" width="9" height="9" viewBox="0 0 9 9"><rect x="0.5" y="0.5" width="8" height="8" fill="#fff" stroke="#9aa6b4"/><path d="M2 7 C2 4.5 3.8 4 5 4 L5 2.4 L7.2 4.8 L5 7.2 L5 5.8 C3.8 5.8 2.8 6.2 2 7Z" fill="#1f5fc4"/></svg>
<span style="left:348px;top:995.84px;font-size:12px;line-height:16px;color:#fff;letter-spacing:-0.245px;">Свойства: Экр...</span>
<div style="left:452px;top:1022px;width:129px;height:2px;background:#7f9fe8;"></div>
<svg style="left:457px;top:991px;" width="24" height="24" viewBox="0 0 24 24"><circle cx="12" cy="12" r="11.5" fill="#f2f6fa"/><circle cx="12" cy="12" r="9.5" fill="#1f66cf"/><path d="M3 10 Q10 2 21 8 L19 11 Q11 7 5 13Z" fill="#fff"/><path d="M4 15 Q12 21 20 15 Q12 18 4 15Z" fill="#8fc0f5"/></svg>
<span style="left:485.5px;top:995.84px;font-size:12px;line-height:16px;color:#fff;letter-spacing:-0.025px;">Total Comman...</span>
<div style="left:589px;top:1022px;width:129px;height:2px;background:#7f9fe8;"></div>
<svg style="left:599px;top:992px;" width="14" height="18" viewBox="0 0 14 18"><path d="M0.5 0.5 H9.5 L13.5 4.5 V17.5 H0.5Z" fill="#ffe9a2"/><path d="M10 9 H13.5 V17.5 H10Z" fill="#f3c95a"/><path d="M0.5 14 H13.5 V17.5 H0.5Z" fill="#f7d57a" opacity=".6"/></svg>
<span style="left:623px;top:995.84px;font-size:12px;line-height:16px;color:#fff;letter-spacing:-0.099px;">C:\Users\Profe...</span>
<div style="left:726px;top:1022px;width:129px;height:2px;background:#7f9fe8;"></div>
<svg style="left:730px;top:990px;" width="26" height="26" viewBox="0 0 32 32"><defs><linearGradient id="oskgc" x1="0" y1="0" x2="1" y2="1"><stop offset="0" stop-color="#1226c4"/><stop offset="0.55" stop-color="#2f6fe0"/><stop offset="1" stop-color="#6fb8f4"/></linearGradient></defs>
<ellipse cx="19" cy="29.800" rx="9" ry="1.800" fill="#b4bec9"/>
<path d="M14 22.500 L24 23.500 L25.500 29.500 L12.500 28.500Z" fill="#d3dae2"/>
<path d="M6 0.800 L31 4 L30 24.500 L8 22.200Z" fill="#dbe3ec" stroke="#a9b5c3" stroke-width=".7"/>
<path d="M7.600 2.600 L29.300 5.400 L28.400 22.600 L9.400 20.600Z" fill="url(#oskgc)"/>
<rect x="1" y="8.500" width="22.500" height="10" rx=".8" fill="#63b2f5" stroke="#2a72d0" stroke-width=".9"/>
<path d="M3 11 H22 M3 13.500 H22 M5 16 H20" stroke="#fff" stroke-width="1.300" stroke-dasharray="1.400 1"/></svg>
<svg style="left:730px;top:1006px;" width="9" height="9" viewBox="0 0 9 9"><rect x="0.5" y="0.5" width="8" height="8" fill="#fff" stroke="#9aa6b4"/><path d="M2 7 C2 4.5 3.8 4 5 4 L5 2.4 L7.2 4.8 L5 7.2 L5 5.8 C3.8 5.8 2.8 6.2 2 7Z" fill="#1f5fc4"/></svg>
<span style="left:759px;top:995.84px;font-size:12px;line-height:16px;color:#fff;letter-spacing:-0.245px;">Свойства: Экр...</span>
<svg style="left:867px;top:999px;" width="12" height="8" viewBox="0 0 12 8"><path d="M1 7 L6 1.5 L11 7" stroke="#fff" stroke-width="1.4" fill="none"/></svg>
<svg style="left:893px;top:995px;" width="10" height="18" viewBox="0 0 10 18"><path d="M2 13 V5 A3 3 0 0 1 8 5 V14 A2 2 0 0 1 4 14 V6" stroke="#bdbdbd" stroke-width="1.1" fill="none"/></svg>
<div style="left:914px;top:997px;width:15px;height:15px;background:#8f1616;border:1px solid #c8c8c8;"></div>
<div style="left:915px;top:998px;width:13px;height:5px;background:#2f9a2f;"></div>
<span style="left:921.5px;top:999.19px;font-size:11px;line-height:14px;color:#fff;left:917.5234375px;-webkit-text-stroke:0.2px #fff;">C</span>
<div style="left:938px;top:997px;width:15px;height:15px;background:#8f1616;border:1px solid #c8c8c8;"></div>
<div style="left:939px;top:998px;width:13px;height:5px;background:#2f9a2f;"></div>
<span style="left:945.5px;top:999.19px;font-size:11px;line-height:14px;color:#fff;left:941.5234375px;-webkit-text-stroke:0.2px #fff;">D</span>
<div style="left:962px;top:997px;width:15px;height:15px;background:#8f1616;border:1px solid #c8c8c8;"></div>
<div style="left:963px;top:998px;width:13px;height:5px;background:#2f9a2f;"></div>
<span style="left:969.5px;top:999.19px;font-size:11px;line-height:14px;color:#fff;left:965.828125px;-webkit-text-stroke:0.2px #fff;">E</span>
<div style="left:986px;top:997px;width:15px;height:15px;background:#8f1616;border:1px solid #c8c8c8;"></div>
<div style="left:987px;top:998px;width:13px;height:5px;background:#2f9a2f;"></div>
<span style="left:993.5px;top:999.19px;font-size:11px;line-height:14px;color:#fff;left:987.9140625px;-webkit-text-stroke:0.2px #fff;">@</span>
<div style="left:1009px;top:996px;width:16px;height:16px;background:#f2ece0;"></div>
<div style="left:1014px;top:999px;width:6px;height:12px;background:#f08a18;"></div>
<div style="left:1015px;top:997px;width:4px;height:3px;background:#333;"></div>
<span style="left:1041px;top:994.00px;font-size:13px;line-height:17px;color:#2fe02f;letter-spacing:-0.234px;left:1034.0px;">34</span>
<div style="left:1034px;top:1008px;width:14px;height:2px;background:#2fe02f;"></div>
<div style="left:1039px;top:1008px;width:9px;height:2px;background:#777;"></div>
<div style="left:1057px;top:997px;width:16px;height:12px;background:#000;"></div>
<div style="left:1057px;top:1011px;width:16px;height:1px;background:#d81818;"></div>
<span style="left:1083px;top:995.84px;font-size:12px;line-height:16px;color:#fff;letter-spacing:-1.005px;">ENG</span>
<div style="left:1113px;top:985px;width:138px;height:39px;background:radial-gradient(ellipse 62% 85% at 50% 78%, #1767c0 0%, #115099 35%, #0c3163 65%, #08193a 100%);"></div>
<span style="left:1182px;top:981.16px;font-size:25.5px;line-height:33px;color:#e6f0fb;letter-spacing:1.987px;left:1132.5px;-webkit-text-stroke:0.8px #13498a;">4:35:59</span>
<span style="left:1185.5px;top:1008.86px;font-size:10.5px;line-height:14px;color:#8fbcec;font-weight:700;letter-spacing:2.541px;left:1145.5px;">ПТ, 10 ОКТ</span>
<div style="left:1275px;top:988px;width:1px;height:34px;background:#555;"></div>
<svg style="left:453px;top:634px;" width="15" height="22" viewBox="0 0 15 22"><path d="M1 1 L1 17 L5 13.5 L8 20.5 L11 19 L8 12.5 L13 12.5Z" fill="#b01010" stroke="#3a0000" stroke-width="1"/><path d="M3 5 L3 13 L5.5 11 L9 11.5Z" fill="#d83a2a"/></svg>
</div></body></html>
